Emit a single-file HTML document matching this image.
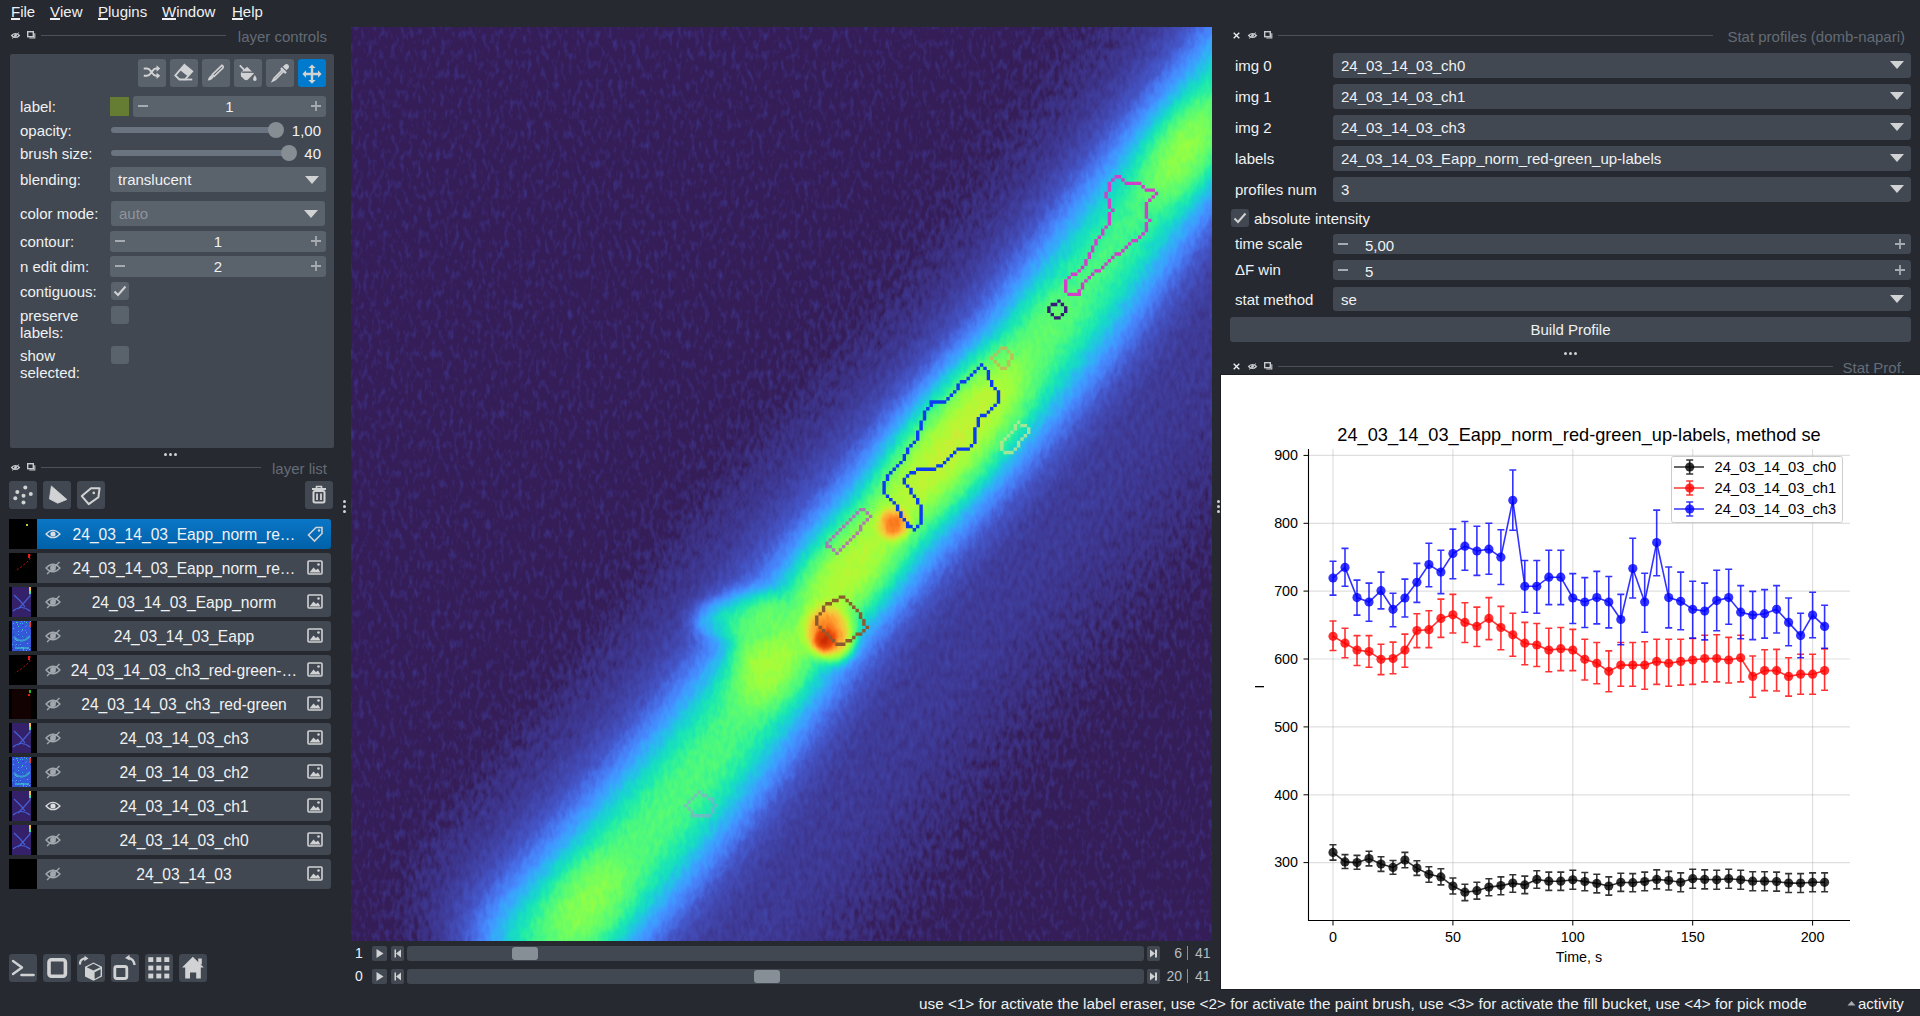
<!DOCTYPE html>
<html><head><meta charset="utf-8">
<style>
*{box-sizing:border-box;margin:0;padding:0}
html,body{width:1920px;height:1016px;overflow:hidden;background:#262930;font-family:"Liberation Sans",sans-serif;color:#f0f1f2;font-size:15px}
.a{position:absolute}
.t{position:absolute;white-space:nowrap;line-height:16px;font-size:15px}
.menu span{position:absolute;top:4px;font-size:15px;line-height:16px}
.menu u{text-decoration:none;position:relative}
.menu u:after{content:"";position:absolute;left:0;right:0;top:15px;height:2px;background:#f0f1f2}
.ttl{position:absolute;color:#646c76;font-size:15px;line-height:16px;white-space:nowrap}
.hl{position:absolute;height:1px;background:#414851}
.panel{position:absolute;background:#414851;border-radius:2px}
.btn{position:absolute;background:#5a626c;border-radius:3px}
.spin{position:absolute;background:#5a626c;border-radius:3px}
.track{position:absolute;background:#6a7380;height:6px;border-radius:3px}
.knob{position:absolute;width:16px;height:16px;border-radius:8px;background:#868e93}
.cb{position:absolute;width:18px;height:18px;background:#5a626c;border-radius:3px}
.row{position:absolute;left:37px;width:294px;height:30px;background:#414851;border-radius:0 3px 3px 0}
.thumb{position:absolute;left:9px;width:28px;height:30px;background:#000}
.lname{position:absolute;left:0;width:294px;text-align:center;top:7px;font-size:15.6px;line-height:17px;white-space:nowrap}
.combo{position:absolute;left:1333px;width:578px;height:25px;background:#414851;border-radius:3px}
.combo span{position:absolute;left:8px;top:4px;font-size:15px;line-height:17px;white-space:nowrap}
.arr{position:absolute;right:8px;top:8px;width:0;height:0;border-left:7px solid transparent;border-right:7px solid transparent;border-top:9px solid #d1d2d4}
svg{position:absolute;overflow:visible}

</style></head><body>
<div class="menu">
<span style="left:11px"><u>F</u>ile</span>
<span style="left:50px"><u>V</u>iew</span>
<span style="left:98px"><u>P</u>lugins</span>
<span style="left:162px"><u>W</u>indow</span>
<span style="left:232px"><u>H</u>elp</span>
</div>
<svg style="left:11px;top:32px" width="9" height="7"><path d="M0.6 3.5 Q4.5 -0.5 8.4 3.5 Q4.5 7.5 0.6 3.5Z" fill="none" stroke="#c8cacd" stroke-width="1.2"/><circle cx="4.5" cy="3.5" r="1.4" fill="#c8cacd"/><path d="M1 6.5L8 0.5" stroke="#c8cacd" stroke-width="0.9"/></svg><svg style="left:27px;top:31px" width="9" height="8"><rect x="0.7" y="0.7" width="5.6" height="5" fill="none" stroke="#c8cacd" stroke-width="1.4"/><path d="M7.8 2.3V7H2.3" fill="none" stroke="#c8cacd" stroke-width="1.1"/></svg>
<div class="hl" style="left:41px;top:35px;width:185px;background:#4a515a"></div>
<div class="ttl" style="right:1593px;top:29px">layer controls</div>
<div class="panel" style="left:10px;top:54px;width:324px;height:394px"></div>
<div class="btn" style="left:138px;top:59px;width:28px;height:28px;background:#5a626c"></div>
<svg style="left:141px;top:63px" width="22" height="22" viewBox="0 0 24 24"><path d="M3 6h3.5c2.5 0 3.5 2 5 4s2.5 4 5 4H19M3 14h3.5c2.5 0 3.5-2 5-4s2.5-4 5-4H19" fill="none" stroke="#d1d2d4" stroke-width="2.2"/><path d="M17 2.5L21 6L17 9.5ZM17 10.5L21 14L17 17.5Z" fill="#d1d2d4"/></svg>
<div class="btn" style="left:170px;top:59px;width:28px;height:28px;background:#5a626c"></div>
<svg style="left:173px;top:63px" width="22" height="22" viewBox="0 0 24 24"><path d="M12.5 2L21 9L13 18H7L2.5 13.5Z" fill="none" stroke="#d1d2d4" stroke-width="2"/><path d="M12.5 2L21 9L16 14.5L7.5 7.5Z" fill="#d1d2d4"/><path d="M13 18H21" stroke="#d1d2d4" stroke-width="2"/></svg>
<div class="btn" style="left:202px;top:59px;width:28px;height:28px;background:#5a626c"></div>
<svg style="left:205px;top:63px" width="22" height="22" viewBox="0 0 24 24"><path d="M18.5 2.5 Q20.5 3.5 19.5 5.5 L10 14.5 L8 12.5 Z" fill="none" stroke="#d1d2d4" stroke-width="1.8"/><path d="M7.5 13 L9.5 15 Q8 19 3 19 Q4 14.5 7.5 13Z" fill="#d1d2d4"/></svg>
<div class="btn" style="left:234px;top:59px;width:28px;height:28px;background:#5a626c"></div>
<svg style="left:237px;top:63px" width="22" height="22" viewBox="0 0 24 24"><path d="M3 2.5L9 8.5" stroke="#d1d2d4" stroke-width="2"/><path d="M5 9.5L11 4L18.5 11.5L12 18 Q10 19.5 8 18 L4.5 14.5 Q3 12.5 5 9.5Z" fill="#d1d2d4"/><path d="M5.5 10 L17.5 10" stroke="#5a626c" stroke-width="1.5"/><path d="M19.5 13 Q21.5 16 21.5 17.5 A2 2 0 0 1 17.5 17.5 Q17.5 16 19.5 13Z" fill="#d1d2d4"/></svg>
<div class="btn" style="left:266px;top:59px;width:28px;height:28px;background:#5a626c"></div>
<svg style="left:269px;top:63px" width="22" height="22" viewBox="0 0 24 24"><path d="M13 5.5L18.5 11" stroke="#d1d2d4" stroke-width="2.5"/><path d="M15 4 L17.5 1.5 Q19.5 0.5 21 2 Q22.5 3.5 21.5 5.5 L19 8Z" fill="#d1d2d4"/><path d="M14.5 7.5L5.5 16.5 L4 19.5 L7 18 L16 9" fill="none" stroke="#d1d2d4" stroke-width="1.8"/></svg>
<div class="btn" style="left:298px;top:59px;width:28px;height:28px;background:#007acc"></div>
<svg style="left:301px;top:63px" width="22" height="22" viewBox="0 0 24 24"><path d="M12 1.5L16 5.5H13.3V10.7H18.5V8L22.5 12L18.5 16V13.3H13.3V18.5H16L12 22.5L8 18.5H10.7V13.3H5.5V16L1.5 12L5.5 8V10.7H10.7V5.5H8Z" fill="#d1d2d4"/></svg>
<div class="t" style="left:20px;top:99px">label:</div>
<div class="a" style="left:110px;top:97px;width:19px;height:19px;background:#647d33"></div>
<div class="spin" style="left:133px;top:96px;width:193px;height:21px"></div>
<div class="a" style="left:138px;top:105px;width:10px;height:2px;background:#a6abb1"></div>
<svg style="left:311px;top:101px" width="10" height="10"><path d="M5 0V10M0 5H10" stroke="#a6abb1" stroke-width="1.8"/></svg>
<div class="t" style="left:133px;width:193px;text-align:center;top:99px">1</div>
<div class="t" style="left:20px;top:123px">opacity:</div>
<div class="track" style="left:111px;top:127px;width:170px"></div>
<div class="knob" style="left:268px;top:122px"></div>
<div class="t" style="right:1599px;top:123px">1,00</div>
<div class="t" style="left:20px;top:146px">brush size:</div>
<div class="track" style="left:111px;top:150px;width:180px"></div>
<div class="knob" style="left:281px;top:145px"></div>
<div class="t" style="right:1599px;top:146px">40</div>
<div class="t" style="left:20px;top:172px">blending:</div>
<div class="spin" style="left:110px;top:167px;width:216px;height:25px"></div>
<div class="t" style="left:118px;top:172px">translucent</div>
<div class="a" style="left:305px;top:176px;border-left:7px solid transparent;border-right:7px solid transparent;border-top:8px solid #d1d2d4"></div>
<div class="t" style="left:20px;top:206px">color mode:</div>
<div class="spin" style="left:111px;top:201px;width:214px;height:25px"></div>
<div class="t" style="left:119px;top:206px;color:#8f959b">auto</div>
<div class="a" style="left:304px;top:210px;border-left:7px solid transparent;border-right:7px solid transparent;border-top:8px solid #d1d2d4"></div>
<div class="t" style="left:20px;top:234px">contour:</div>
<div class="spin" style="left:110px;top:231px;width:216px;height:21px"></div>
<div class="a" style="left:115px;top:240px;width:10px;height:2px;background:#a6abb1"></div>
<svg style="left:311px;top:236px" width="10" height="10"><path d="M5 0V10M0 5H10" stroke="#a6abb1" stroke-width="1.8"/></svg>
<div class="t" style="left:110px;width:216px;text-align:center;top:234px">1</div>
<div class="t" style="left:20px;top:259px">n edit dim:</div>
<div class="spin" style="left:110px;top:256px;width:216px;height:21px"></div>
<div class="a" style="left:115px;top:265px;width:10px;height:2px;background:#a6abb1"></div>
<svg style="left:311px;top:261px" width="10" height="10"><path d="M5 0V10M0 5H10" stroke="#a6abb1" stroke-width="1.8"/></svg>
<div class="t" style="left:110px;width:216px;text-align:center;top:259px">2</div>
<div class="t" style="left:20px;top:284px">contiguous:</div>
<div class="cb" style="left:111px;top:282px"></div>
<svg style="left:113px;top:285px" width="14" height="12"><path d="M1.5 6.5L5 10L12.5 1.5" fill="none" stroke="#d1d2d4" stroke-width="2"/></svg>
<div class="t" style="left:20px;top:307px;line-height:17px">preserve<br>labels:</div>
<div class="cb" style="left:111px;top:306px"></div>
<div class="t" style="left:20px;top:347px;line-height:17px">show<br>selected:</div>
<div class="cb" style="left:111px;top:346px"></div>
<div class="a" style="left:164px;top:453px;width:3px;height:3px;border-radius:2px;background:#d1d2d4"></div>
<div class="a" style="left:169px;top:453px;width:3px;height:3px;border-radius:2px;background:#d1d2d4"></div>
<div class="a" style="left:174px;top:453px;width:3px;height:3px;border-radius:2px;background:#d1d2d4"></div>
<svg style="left:11px;top:464px" width="9" height="7"><path d="M0.6 3.5 Q4.5 -0.5 8.4 3.5 Q4.5 7.5 0.6 3.5Z" fill="none" stroke="#c8cacd" stroke-width="1.2"/><circle cx="4.5" cy="3.5" r="1.4" fill="#c8cacd"/><path d="M1 6.5L8 0.5" stroke="#c8cacd" stroke-width="0.9"/></svg><svg style="left:27px;top:463px" width="9" height="8"><rect x="0.7" y="0.7" width="5.6" height="5" fill="none" stroke="#c8cacd" stroke-width="1.4"/><path d="M7.8 2.3V7H2.3" fill="none" stroke="#c8cacd" stroke-width="1.1"/></svg>
<div class="hl" style="left:41px;top:467px;width:220px;background:#4a515a"></div>
<div class="ttl" style="right:1593px;top:461px">layer list</div>
<div class="btn" style="left:9px;top:481px;width:28px;height:28px;background:#414851"></div>
<svg style="left:9px;top:481px" width="28" height="28" viewBox="0 0 28 28"><circle cx="16.3" cy="6.5" r="2" fill="#d1d2d4"/><circle cx="8.3" cy="11" r="2" fill="#d1d2d4"/><circle cx="21.8" cy="13" r="2" fill="#d1d2d4"/><circle cx="14.5" cy="14.8" r="2" fill="#d1d2d4"/><circle cx="6.3" cy="17.3" r="2" fill="#d1d2d4"/><circle cx="14.5" cy="21.6" r="2" fill="#d1d2d4"/></svg>
<div class="btn" style="left:43px;top:481px;width:28px;height:28px;background:#414851"></div>
<svg style="left:43px;top:481px" width="28" height="28" viewBox="0 0 28 28"><path d="M8.4 5L23.9 18.5L14.7 22.2L6.4 17.9Z" fill="#d1d2d4" stroke="#d1d2d4" stroke-width="0.8" stroke-linejoin="round"/></svg>
<div class="btn" style="left:77px;top:481px;width:28px;height:28px;background:#414851"></div>
<svg style="left:77px;top:481px" width="28" height="28" viewBox="0 0 28 28"><path d="M14 7.2H22.6L21.4 16.2L11.7 23.1L4.8 15.1Z" fill="none" stroke="#d1d2d4" stroke-width="2" stroke-linejoin="round"/><circle cx="16.8" cy="11.9" r="1.3" fill="#d1d2d4"/></svg>
<div class="btn" style="left:305px;top:481px;width:28px;height:28px;background:#414851"></div>
<svg style="left:305px;top:481px" width="28" height="28" viewBox="0 0 28 28"><path d="M7 8H21" stroke="#d1d2d4" stroke-width="2"/><path d="M11.5 7.5V5.5H16.5V7.5" fill="none" stroke="#d1d2d4" stroke-width="1.6"/><rect x="8.5" y="10" width="11" height="11.5" rx="1.5" fill="none" stroke="#d1d2d4" stroke-width="2"/><path d="M12 12.5V19M16 12.5V19" stroke="#d1d2d4" stroke-width="1.8"/></svg>
<div class="a" style="left:343px;top:500px;width:3px;height:3px;border-radius:2px;background:#d1d2d4"></div>
<div class="a" style="left:343px;top:505px;width:3px;height:3px;border-radius:2px;background:#d1d2d4"></div>
<div class="a" style="left:343px;top:510px;width:3px;height:3px;border-radius:2px;background:#d1d2d4"></div>
<svg style="left:9px;top:519px" width="28" height="30"><rect width="28" height="30" fill="#000"/><rect x="17" y="5" width="2" height="2" fill="#c8c040"/></svg>
<div class="row" style="top:519px;background:linear-gradient(#0a76c6,#0061a9)"></div>
<svg style="left:45px;top:527px" width="16" height="14"><path d="M1 7 Q8 -0.5 15 7 Q8 14.5 1 7Z" fill="none" stroke="#dcdde0" stroke-width="1.2"/><circle cx="8" cy="7" r="2.6" fill="#dcdde0"/></svg>
<div class="t" style="left:37px;width:294px;text-align:center;top:526px;font-size:15.6px;line-height:17px;padding-left:0px">24_03_14_03_Eapp_norm_re…</div>
<svg style="left:307px;top:526px" width="16" height="16"><path d="M9 1.5H15V7.5L7.5 15L1.5 9Z" fill="none" stroke="#d1d2d4" stroke-width="1.6"/><circle cx="12" cy="4.5" r="1.2" fill="#d1d2d4"/></svg>
<svg style="left:9px;top:553px" width="28" height="30"><rect width="28" height="30" fill="#000"/><path d="M21 1V6L17 10L12 14L6 18" fill="none" stroke="#c01010" stroke-width="1" stroke-dasharray="2 2"/><rect x="19" y="1" width="2" height="4" fill="#e02020"/></svg>
<div class="row" style="top:553px;background:#414851"></div>
<svg style="left:45px;top:561px" width="16" height="14"><path d="M1 7 Q8 -0.5 15 7 Q8 14.5 1 7Z" fill="none" stroke="#a3a8ae" stroke-width="1.3"/><circle cx="8" cy="7" r="2.9" fill="#a3a8ae"/><path d="M2 13L14.5 1" stroke="#a3a8ae" stroke-width="1.3"/></svg>
<div class="t" style="left:37px;width:294px;text-align:center;top:560px;font-size:15.6px;line-height:17px;padding-left:0px">24_03_14_03_Eapp_norm_re…</div>
<svg style="left:307px;top:560px" width="16" height="16"><rect x="1" y="1" width="14" height="13" rx="1" fill="none" stroke="#d1d2d4" stroke-width="1.6"/><path d="M2.5 12.5L6.5 7.5L9 10L11 8.5L13.5 12.5Z" fill="#d1d2d4"/><circle cx="11.5" cy="4.5" r="1.3" fill="#d1d2d4"/></svg>
<svg style="left:9px;top:587px" width="28" height="30"><rect width="28" height="30" fill="#000"/><rect x="3" y="0" width="19" height="30" fill="#35206a"/><path d="M21 2V9L14 17L9 22M5 8Q12 14 16 20M4 24Q12 17 21 24" fill="none" stroke="#4a70f0" stroke-width="1.2" stroke-opacity="0.8"/><rect x="20" y="0" width="2" height="4" fill="#f0c030"/><rect x="20" y="4" width="2" height="3" fill="#40e0a0"/></svg>
<div class="row" style="top:587px;background:#414851"></div>
<svg style="left:45px;top:595px" width="16" height="14"><path d="M1 7 Q8 -0.5 15 7 Q8 14.5 1 7Z" fill="none" stroke="#a3a8ae" stroke-width="1.3"/><circle cx="8" cy="7" r="2.9" fill="#a3a8ae"/><path d="M2 13L14.5 1" stroke="#a3a8ae" stroke-width="1.3"/></svg>
<div class="t" style="left:37px;width:294px;text-align:center;top:594px;font-size:15.6px;line-height:17px;padding-left:0px">24_03_14_03_Eapp_norm</div>
<svg style="left:307px;top:594px" width="16" height="16"><rect x="1" y="1" width="14" height="13" rx="1" fill="none" stroke="#d1d2d4" stroke-width="1.6"/><path d="M2.5 12.5L6.5 7.5L9 10L11 8.5L13.5 12.5Z" fill="#d1d2d4"/><circle cx="11.5" cy="4.5" r="1.3" fill="#d1d2d4"/></svg>
<svg style="left:9px;top:621px" width="28" height="30"><rect width="28" height="30" fill="#000"/><rect x="3" y="0" width="19" height="30" fill="#3458d8"/><rect x="11" y="23" width="1" height="1" fill="#30b0e8"/><rect x="19" y="0" width="1" height="1" fill="#2c48c0"/><rect x="10" y="20" width="1" height="1" fill="#2a3aa0"/><rect x="8" y="3" width="1" height="1" fill="#30b0e8"/><rect x="18" y="27" width="1" height="1" fill="#4a80f0"/><rect x="15" y="17" width="1" height="1" fill="#2a3aa0"/><rect x="21" y="7" width="1" height="1" fill="#2a3aa0"/><rect x="9" y="13" width="1" height="1" fill="#30b0e8"/><rect x="8" y="29" width="1" height="1" fill="#2c48c0"/><rect x="8" y="24" width="1" height="1" fill="#2a3aa0"/><rect x="7" y="19" width="1" height="1" fill="#5aa0ff"/><rect x="17" y="4" width="1" height="1" fill="#4a80f0"/><rect x="3" y="27" width="1" height="1" fill="#2a3aa0"/><rect x="9" y="24" width="1" height="1" fill="#4a80f0"/><rect x="8" y="27" width="1" height="1" fill="#4a80f0"/><rect x="12" y="10" width="1" height="1" fill="#4a80f0"/><rect x="20" y="28" width="1" height="1" fill="#38d0b0"/><rect x="9" y="5" width="1" height="1" fill="#38d0b0"/><rect x="9" y="28" width="1" height="1" fill="#2c48c0"/><rect x="12" y="0" width="1" height="1" fill="#30b0e8"/><rect x="16" y="5" width="1" height="1" fill="#4a80f0"/><rect x="11" y="2" width="1" height="1" fill="#30b0e8"/><rect x="12" y="26" width="1" height="1" fill="#5aa0ff"/><rect x="21" y="0" width="1" height="1" fill="#5aa0ff"/><rect x="13" y="2" width="1" height="1" fill="#30b0e8"/><rect x="14" y="26" width="1" height="1" fill="#30b0e8"/><rect x="18" y="22" width="1" height="1" fill="#30b0e8"/><rect x="8" y="15" width="1" height="1" fill="#2c48c0"/><rect x="8" y="1" width="1" height="1" fill="#30b0e8"/><rect x="3" y="23" width="1" height="1" fill="#30b0e8"/><rect x="15" y="0" width="1" height="1" fill="#5aa0ff"/><rect x="16" y="11" width="1" height="1" fill="#2c48c0"/><rect x="21" y="26" width="1" height="1" fill="#2a3aa0"/><rect x="17" y="1" width="1" height="1" fill="#38d0b0"/><rect x="8" y="19" width="1" height="1" fill="#4a80f0"/><rect x="6" y="24" width="1" height="1" fill="#4a80f0"/><rect x="17" y="11" width="1" height="1" fill="#5aa0ff"/><rect x="14" y="28" width="1" height="1" fill="#5aa0ff"/><rect x="11" y="24" width="1" height="1" fill="#2c48c0"/><rect x="6" y="18" width="1" height="1" fill="#38d0b0"/><rect x="14" y="27" width="1" height="1" fill="#30b0e8"/><rect x="4" y="13" width="1" height="1" fill="#2a3aa0"/><rect x="9" y="10" width="1" height="1" fill="#5aa0ff"/><rect x="14" y="29" width="1" height="1" fill="#4a80f0"/><rect x="13" y="8" width="1" height="1" fill="#38d0b0"/><rect x="20" y="2" width="1" height="1" fill="#30b0e8"/><rect x="13" y="9" width="1" height="1" fill="#4a80f0"/><rect x="5" y="20" width="1" height="1" fill="#4a80f0"/><rect x="12" y="15" width="1" height="1" fill="#4a80f0"/><rect x="4" y="2" width="1" height="1" fill="#5aa0ff"/><rect x="20" y="29" width="1" height="1" fill="#2c48c0"/><rect x="4" y="7" width="1" height="1" fill="#38d0b0"/><rect x="14" y="26" width="1" height="1" fill="#30b0e8"/><rect x="17" y="20" width="1" height="1" fill="#2c48c0"/><rect x="7" y="1" width="1" height="1" fill="#38d0b0"/><rect x="4" y="25" width="1" height="1" fill="#2c48c0"/><rect x="13" y="26" width="1" height="1" fill="#4a80f0"/><rect x="7" y="23" width="1" height="1" fill="#5aa0ff"/><rect x="7" y="20" width="1" height="1" fill="#2c48c0"/><rect x="6" y="5" width="1" height="1" fill="#2c48c0"/><rect x="14" y="4" width="1" height="1" fill="#2a3aa0"/><rect x="16" y="9" width="1" height="1" fill="#4a80f0"/><rect x="17" y="29" width="1" height="1" fill="#5aa0ff"/><rect x="8" y="16" width="1" height="1" fill="#2c48c0"/><rect x="18" y="22" width="1" height="1" fill="#38d0b0"/><rect x="13" y="15" width="1" height="1" fill="#30b0e8"/><rect x="12" y="15" width="1" height="1" fill="#2c48c0"/><rect x="7" y="3" width="1" height="1" fill="#2c48c0"/><rect x="20" y="5" width="1" height="1" fill="#38d0b0"/><rect x="18" y="27" width="1" height="1" fill="#30b0e8"/><path d="M5 16Q12 24 21 15M6 27L20 27" stroke="#34c8c8" stroke-width="2" fill="none" stroke-opacity="0.6"/><rect x="20" y="1" width="2" height="5" fill="#e04020"/></svg>
<div class="row" style="top:621px;background:#414851"></div>
<svg style="left:45px;top:629px" width="16" height="14"><path d="M1 7 Q8 -0.5 15 7 Q8 14.5 1 7Z" fill="none" stroke="#a3a8ae" stroke-width="1.3"/><circle cx="8" cy="7" r="2.9" fill="#a3a8ae"/><path d="M2 13L14.5 1" stroke="#a3a8ae" stroke-width="1.3"/></svg>
<div class="t" style="left:37px;width:294px;text-align:center;top:628px;font-size:15.6px;line-height:17px;padding-left:0px">24_03_14_03_Eapp</div>
<svg style="left:307px;top:628px" width="16" height="16"><rect x="1" y="1" width="14" height="13" rx="1" fill="none" stroke="#d1d2d4" stroke-width="1.6"/><path d="M2.5 12.5L6.5 7.5L9 10L11 8.5L13.5 12.5Z" fill="#d1d2d4"/><circle cx="11.5" cy="4.5" r="1.3" fill="#d1d2d4"/></svg>
<svg style="left:9px;top:655px" width="28" height="30"><rect width="28" height="30" fill="#000"/><path d="M21 1V6L17 10L12 14L6 18" fill="none" stroke="#c01010" stroke-width="1" stroke-dasharray="2 2"/><rect x="19" y="1" width="2" height="4" fill="#e02020"/></svg>
<div class="row" style="top:655px;background:#414851"></div>
<svg style="left:45px;top:663px" width="16" height="14"><path d="M1 7 Q8 -0.5 15 7 Q8 14.5 1 7Z" fill="none" stroke="#a3a8ae" stroke-width="1.3"/><circle cx="8" cy="7" r="2.9" fill="#a3a8ae"/><path d="M2 13L14.5 1" stroke="#a3a8ae" stroke-width="1.3"/></svg>
<div class="t" style="left:37px;width:294px;text-align:center;top:662px;font-size:15.6px;line-height:17px;padding-left:0px">24_03_14_03_ch3_red-green-…</div>
<svg style="left:307px;top:662px" width="16" height="16"><rect x="1" y="1" width="14" height="13" rx="1" fill="none" stroke="#d1d2d4" stroke-width="1.6"/><path d="M2.5 12.5L6.5 7.5L9 10L11 8.5L13.5 12.5Z" fill="#d1d2d4"/><circle cx="11.5" cy="4.5" r="1.3" fill="#d1d2d4"/></svg>
<svg style="left:9px;top:689px" width="28" height="30"><rect width="28" height="30" fill="#000"/><rect x="3" y="0" width="19" height="30" fill="#120202"/><rect x="20" y="1" width="2" height="3" fill="#20c020"/><rect x="19" y="5" width="2" height="2" fill="#d02020"/></svg>
<div class="row" style="top:689px;background:#414851"></div>
<svg style="left:45px;top:697px" width="16" height="14"><path d="M1 7 Q8 -0.5 15 7 Q8 14.5 1 7Z" fill="none" stroke="#a3a8ae" stroke-width="1.3"/><circle cx="8" cy="7" r="2.9" fill="#a3a8ae"/><path d="M2 13L14.5 1" stroke="#a3a8ae" stroke-width="1.3"/></svg>
<div class="t" style="left:37px;width:294px;text-align:center;top:696px;font-size:15.6px;line-height:17px;padding-left:0px">24_03_14_03_ch3_red-green</div>
<svg style="left:307px;top:696px" width="16" height="16"><rect x="1" y="1" width="14" height="13" rx="1" fill="none" stroke="#d1d2d4" stroke-width="1.6"/><path d="M2.5 12.5L6.5 7.5L9 10L11 8.5L13.5 12.5Z" fill="#d1d2d4"/><circle cx="11.5" cy="4.5" r="1.3" fill="#d1d2d4"/></svg>
<svg style="left:9px;top:723px" width="28" height="30"><rect width="28" height="30" fill="#000"/><rect x="3" y="0" width="19" height="30" fill="#35206a"/><path d="M21 2V9L14 17L9 22M5 8Q12 14 16 20M4 24Q12 17 21 24" fill="none" stroke="#4a70f0" stroke-width="1.2" stroke-opacity="0.8"/><rect x="20" y="0" width="2" height="4" fill="#f0c030"/><rect x="20" y="4" width="2" height="3" fill="#40e0a0"/></svg>
<div class="row" style="top:723px;background:#414851"></div>
<svg style="left:45px;top:731px" width="16" height="14"><path d="M1 7 Q8 -0.5 15 7 Q8 14.5 1 7Z" fill="none" stroke="#a3a8ae" stroke-width="1.3"/><circle cx="8" cy="7" r="2.9" fill="#a3a8ae"/><path d="M2 13L14.5 1" stroke="#a3a8ae" stroke-width="1.3"/></svg>
<div class="t" style="left:37px;width:294px;text-align:center;top:730px;font-size:15.6px;line-height:17px;padding-left:0px">24_03_14_03_ch3</div>
<svg style="left:307px;top:730px" width="16" height="16"><rect x="1" y="1" width="14" height="13" rx="1" fill="none" stroke="#d1d2d4" stroke-width="1.6"/><path d="M2.5 12.5L6.5 7.5L9 10L11 8.5L13.5 12.5Z" fill="#d1d2d4"/><circle cx="11.5" cy="4.5" r="1.3" fill="#d1d2d4"/></svg>
<svg style="left:9px;top:757px" width="28" height="30"><rect width="28" height="30" fill="#000"/><rect x="3" y="0" width="19" height="30" fill="#3458d8"/><rect x="11" y="23" width="1" height="1" fill="#30b0e8"/><rect x="19" y="0" width="1" height="1" fill="#2c48c0"/><rect x="10" y="20" width="1" height="1" fill="#2a3aa0"/><rect x="8" y="3" width="1" height="1" fill="#30b0e8"/><rect x="18" y="27" width="1" height="1" fill="#4a80f0"/><rect x="15" y="17" width="1" height="1" fill="#2a3aa0"/><rect x="21" y="7" width="1" height="1" fill="#2a3aa0"/><rect x="9" y="13" width="1" height="1" fill="#30b0e8"/><rect x="8" y="29" width="1" height="1" fill="#2c48c0"/><rect x="8" y="24" width="1" height="1" fill="#2a3aa0"/><rect x="7" y="19" width="1" height="1" fill="#5aa0ff"/><rect x="17" y="4" width="1" height="1" fill="#4a80f0"/><rect x="3" y="27" width="1" height="1" fill="#2a3aa0"/><rect x="9" y="24" width="1" height="1" fill="#4a80f0"/><rect x="8" y="27" width="1" height="1" fill="#4a80f0"/><rect x="12" y="10" width="1" height="1" fill="#4a80f0"/><rect x="20" y="28" width="1" height="1" fill="#38d0b0"/><rect x="9" y="5" width="1" height="1" fill="#38d0b0"/><rect x="9" y="28" width="1" height="1" fill="#2c48c0"/><rect x="12" y="0" width="1" height="1" fill="#30b0e8"/><rect x="16" y="5" width="1" height="1" fill="#4a80f0"/><rect x="11" y="2" width="1" height="1" fill="#30b0e8"/><rect x="12" y="26" width="1" height="1" fill="#5aa0ff"/><rect x="21" y="0" width="1" height="1" fill="#5aa0ff"/><rect x="13" y="2" width="1" height="1" fill="#30b0e8"/><rect x="14" y="26" width="1" height="1" fill="#30b0e8"/><rect x="18" y="22" width="1" height="1" fill="#30b0e8"/><rect x="8" y="15" width="1" height="1" fill="#2c48c0"/><rect x="8" y="1" width="1" height="1" fill="#30b0e8"/><rect x="3" y="23" width="1" height="1" fill="#30b0e8"/><rect x="15" y="0" width="1" height="1" fill="#5aa0ff"/><rect x="16" y="11" width="1" height="1" fill="#2c48c0"/><rect x="21" y="26" width="1" height="1" fill="#2a3aa0"/><rect x="17" y="1" width="1" height="1" fill="#38d0b0"/><rect x="8" y="19" width="1" height="1" fill="#4a80f0"/><rect x="6" y="24" width="1" height="1" fill="#4a80f0"/><rect x="17" y="11" width="1" height="1" fill="#5aa0ff"/><rect x="14" y="28" width="1" height="1" fill="#5aa0ff"/><rect x="11" y="24" width="1" height="1" fill="#2c48c0"/><rect x="6" y="18" width="1" height="1" fill="#38d0b0"/><rect x="14" y="27" width="1" height="1" fill="#30b0e8"/><rect x="4" y="13" width="1" height="1" fill="#2a3aa0"/><rect x="9" y="10" width="1" height="1" fill="#5aa0ff"/><rect x="14" y="29" width="1" height="1" fill="#4a80f0"/><rect x="13" y="8" width="1" height="1" fill="#38d0b0"/><rect x="20" y="2" width="1" height="1" fill="#30b0e8"/><rect x="13" y="9" width="1" height="1" fill="#4a80f0"/><rect x="5" y="20" width="1" height="1" fill="#4a80f0"/><rect x="12" y="15" width="1" height="1" fill="#4a80f0"/><rect x="4" y="2" width="1" height="1" fill="#5aa0ff"/><rect x="20" y="29" width="1" height="1" fill="#2c48c0"/><rect x="4" y="7" width="1" height="1" fill="#38d0b0"/><rect x="14" y="26" width="1" height="1" fill="#30b0e8"/><rect x="17" y="20" width="1" height="1" fill="#2c48c0"/><rect x="7" y="1" width="1" height="1" fill="#38d0b0"/><rect x="4" y="25" width="1" height="1" fill="#2c48c0"/><rect x="13" y="26" width="1" height="1" fill="#4a80f0"/><rect x="7" y="23" width="1" height="1" fill="#5aa0ff"/><rect x="7" y="20" width="1" height="1" fill="#2c48c0"/><rect x="6" y="5" width="1" height="1" fill="#2c48c0"/><rect x="14" y="4" width="1" height="1" fill="#2a3aa0"/><rect x="16" y="9" width="1" height="1" fill="#4a80f0"/><rect x="17" y="29" width="1" height="1" fill="#5aa0ff"/><rect x="8" y="16" width="1" height="1" fill="#2c48c0"/><rect x="18" y="22" width="1" height="1" fill="#38d0b0"/><rect x="13" y="15" width="1" height="1" fill="#30b0e8"/><rect x="12" y="15" width="1" height="1" fill="#2c48c0"/><rect x="7" y="3" width="1" height="1" fill="#2c48c0"/><rect x="20" y="5" width="1" height="1" fill="#38d0b0"/><rect x="18" y="27" width="1" height="1" fill="#30b0e8"/><path d="M5 16Q12 24 21 15M6 27L20 27" stroke="#34c8c8" stroke-width="2" fill="none" stroke-opacity="0.6"/><rect x="20" y="1" width="2" height="5" fill="#e04020"/></svg>
<div class="row" style="top:757px;background:#414851"></div>
<svg style="left:45px;top:765px" width="16" height="14"><path d="M1 7 Q8 -0.5 15 7 Q8 14.5 1 7Z" fill="none" stroke="#a3a8ae" stroke-width="1.3"/><circle cx="8" cy="7" r="2.9" fill="#a3a8ae"/><path d="M2 13L14.5 1" stroke="#a3a8ae" stroke-width="1.3"/></svg>
<div class="t" style="left:37px;width:294px;text-align:center;top:764px;font-size:15.6px;line-height:17px;padding-left:0px">24_03_14_03_ch2</div>
<svg style="left:307px;top:764px" width="16" height="16"><rect x="1" y="1" width="14" height="13" rx="1" fill="none" stroke="#d1d2d4" stroke-width="1.6"/><path d="M2.5 12.5L6.5 7.5L9 10L11 8.5L13.5 12.5Z" fill="#d1d2d4"/><circle cx="11.5" cy="4.5" r="1.3" fill="#d1d2d4"/></svg>
<svg style="left:9px;top:791px" width="28" height="30"><rect width="28" height="30" fill="#000"/><rect x="3" y="0" width="19" height="30" fill="#35206a"/><path d="M21 2V9L14 17L9 22M5 8Q12 14 16 20M4 24Q12 17 21 24" fill="none" stroke="#4a70f0" stroke-width="1.2" stroke-opacity="0.8"/><rect x="20" y="0" width="2" height="4" fill="#f0c030"/><rect x="20" y="4" width="2" height="3" fill="#40e0a0"/></svg>
<div class="row" style="top:791px;background:#414851"></div>
<svg style="left:45px;top:799px" width="16" height="14"><path d="M1 7 Q8 -0.5 15 7 Q8 14.5 1 7Z" fill="none" stroke="#dcdde0" stroke-width="1.2"/><circle cx="8" cy="7" r="2.6" fill="#dcdde0"/></svg>
<div class="t" style="left:37px;width:294px;text-align:center;top:798px;font-size:15.6px;line-height:17px;padding-left:0px">24_03_14_03_ch1</div>
<svg style="left:307px;top:798px" width="16" height="16"><rect x="1" y="1" width="14" height="13" rx="1" fill="none" stroke="#d1d2d4" stroke-width="1.6"/><path d="M2.5 12.5L6.5 7.5L9 10L11 8.5L13.5 12.5Z" fill="#d1d2d4"/><circle cx="11.5" cy="4.5" r="1.3" fill="#d1d2d4"/></svg>
<svg style="left:9px;top:825px" width="28" height="30"><rect width="28" height="30" fill="#000"/><rect x="3" y="0" width="19" height="30" fill="#35206a"/><path d="M21 2V9L14 17L9 22M5 8Q12 14 16 20M4 24Q12 17 21 24" fill="none" stroke="#4a70f0" stroke-width="1.2" stroke-opacity="0.8"/><rect x="20" y="0" width="2" height="4" fill="#f0c030"/><rect x="20" y="4" width="2" height="3" fill="#40e0a0"/></svg>
<div class="row" style="top:825px;background:#414851"></div>
<svg style="left:45px;top:833px" width="16" height="14"><path d="M1 7 Q8 -0.5 15 7 Q8 14.5 1 7Z" fill="none" stroke="#a3a8ae" stroke-width="1.3"/><circle cx="8" cy="7" r="2.9" fill="#a3a8ae"/><path d="M2 13L14.5 1" stroke="#a3a8ae" stroke-width="1.3"/></svg>
<div class="t" style="left:37px;width:294px;text-align:center;top:832px;font-size:15.6px;line-height:17px;padding-left:0px">24_03_14_03_ch0</div>
<svg style="left:307px;top:832px" width="16" height="16"><rect x="1" y="1" width="14" height="13" rx="1" fill="none" stroke="#d1d2d4" stroke-width="1.6"/><path d="M2.5 12.5L6.5 7.5L9 10L11 8.5L13.5 12.5Z" fill="#d1d2d4"/><circle cx="11.5" cy="4.5" r="1.3" fill="#d1d2d4"/></svg>
<svg style="left:9px;top:859px" width="28" height="30"><rect width="28" height="30" fill="#000"/></svg>
<div class="row" style="top:859px;background:#414851"></div>
<svg style="left:45px;top:867px" width="16" height="14"><path d="M1 7 Q8 -0.5 15 7 Q8 14.5 1 7Z" fill="none" stroke="#a3a8ae" stroke-width="1.3"/><circle cx="8" cy="7" r="2.9" fill="#a3a8ae"/><path d="M2 13L14.5 1" stroke="#a3a8ae" stroke-width="1.3"/></svg>
<div class="t" style="left:37px;width:294px;text-align:center;top:866px;font-size:15.6px;line-height:17px;padding-left:0px">24_03_14_03</div>
<svg style="left:307px;top:866px" width="16" height="16"><rect x="1" y="1" width="14" height="13" rx="1" fill="none" stroke="#d1d2d4" stroke-width="1.6"/><path d="M2.5 12.5L6.5 7.5L9 10L11 8.5L13.5 12.5Z" fill="#d1d2d4"/><circle cx="11.5" cy="4.5" r="1.3" fill="#d1d2d4"/></svg>
<div class="btn" style="left:9px;top:954px;width:28px;height:28px;background:#414851"></div>
<svg style="left:9px;top:954px" width="28" height="28" viewBox="0 0 28 28"><path d="M4 7L13 13.5L4 20" fill="none" stroke="#d1d2d4" stroke-width="2.4" stroke-linecap="round" stroke-linejoin="round"/><path d="M12.5 21H24.5" stroke="#d1d2d4" stroke-width="2.6" stroke-linecap="round"/></svg>
<div class="btn" style="left:43px;top:954px;width:28px;height:28px;background:#414851"></div>
<svg style="left:43px;top:954px" width="28" height="28" viewBox="0 0 28 28"><rect x="6" y="5.8" width="16.4" height="16.4" rx="2.5" fill="none" stroke="#d1d2d4" stroke-width="3.6"/></svg>
<div class="btn" style="left:77px;top:954px;width:28px;height:28px;background:#414851"></div>
<svg style="left:77px;top:954px" width="28" height="28" viewBox="0 0 28 28"><path d="M16.5 8.5L25 12.8V22.5L16.5 26.8L8 22.5V12.8Z" fill="#d1d2d4"/><path d="M16.5 9.8L23.2 13.2L16.5 16.6L9.8 13.2Z" fill="#414851"/><path d="M17.6 18.3L23.6 15.2V21.8L17.6 24.9Z" fill="#414851"/><path d="M3 10.5 Q2.5 5.5 8 4.3" fill="none" stroke="#d1d2d4" stroke-width="2.2"/><path d="M7.5 1.8L11.5 4.6L7.2 7.2Z" fill="#d1d2d4"/></svg>
<div class="btn" style="left:111px;top:954px;width:28px;height:28px;background:#414851"></div>
<svg style="left:111px;top:954px" width="28" height="28" viewBox="0 0 28 28"><rect x="3.8" y="12.5" width="12" height="12" rx="2" fill="none" stroke="#d1d2d4" stroke-width="2.8"/><path d="M23.5 11 Q23 5 17.5 3.8" fill="none" stroke="#d1d2d4" stroke-width="2.4"/><path d="M18.5 0.8L14 3.9L18.8 6.5Z" fill="#d1d2d4"/></svg>
<div class="btn" style="left:145px;top:954px;width:28px;height:28px;background:#414851"></div>
<svg style="left:145px;top:954px" width="28" height="28" viewBox="0 0 28 28"><rect x="3.3" y="3.2" width="5" height="4.8" fill="#d1d2d4"/><rect x="3.3" y="11.6" width="5" height="4.8" fill="#d1d2d4"/><rect x="3.3" y="19.6" width="5" height="4.8" fill="#d1d2d4"/><rect x="11.3" y="3.2" width="5" height="4.8" fill="#d1d2d4"/><rect x="11.3" y="11.6" width="5" height="4.8" fill="#d1d2d4"/><rect x="11.3" y="19.6" width="5" height="4.8" fill="#d1d2d4"/><rect x="19.3" y="3.2" width="5" height="4.8" fill="#d1d2d4"/><rect x="19.3" y="11.6" width="5" height="4.8" fill="#d1d2d4"/><rect x="19.3" y="19.6" width="5" height="4.8" fill="#d1d2d4"/></svg>
<div class="btn" style="left:179px;top:954px;width:28px;height:28px;background:#414851"></div>
<svg style="left:179px;top:954px" width="28" height="28" viewBox="0 0 28 28"><path d="M13.8 2.8L24.8 13.5H21.8V24.5H17.2V18.5H11V24.5H6.2V13.5H3Z" fill="#d1d2d4"/><rect x="19.2" y="4.5" width="3.6" height="6" fill="#d1d2d4"/></svg><svg style="left:351px;top:27px" width="861" height="914" viewBox="351 27 861 914">
<defs>
<filter id="cmap" x="351" y="27" width="861" height="914" filterUnits="userSpaceOnUse" color-interpolation-filters="sRGB"><feTurbulence type="fractalNoise" baseFrequency="0.22 0.1" numOctaves="2" seed="7" result="nz"/><feColorMatrix in="nz" type="matrix" values="1 0 0 0 0 1 0 0 0 0 1 0 0 0 0 0 0 0 0 1" result="ng"/><feComposite in="SourceGraphic" in2="ng" operator="arithmetic" k1="0" k2="1" k3="0.07" k4="-0.035"/><feComponentTransfer><feFuncR type="table" tableValues="0.209 0.225 0.236 0.242 0.248 0.254 0.259 0.263 0.267 0.270 0.274 0.276 0.277 0.276 0.274 0.269 0.254 0.239 0.220 0.193 0.172 0.145 0.122 0.104 0.094 0.095 0.108 0.135 0.174 0.221 0.276 0.320 0.350 0.397 0.443 0.489 0.547 0.586 0.633 0.664 0.706 0.746 0.795 0.832 0.867 0.906 0.933 0.956 0.973 0.988 0.994 0.997 0.994 0.988 0.978 0.966 0.945 0.926 0.905 0.887 0.868 0.847 0.816 0.791 0.765"/><feFuncG type="table" tableValues="0.118 0.164 0.197 0.219 0.241 0.263 0.285 0.306 0.328 0.349 0.390 0.421 0.452 0.491 0.521 0.550 0.590 0.619 0.649 0.688 0.717 0.754 0.789 0.822 0.852 0.878 0.901 0.922 0.941 0.957 0.971 0.980 0.985 0.991 0.996 0.998 0.999 0.997 0.992 0.985 0.973 0.956 0.930 0.906 0.880 0.843 0.812 0.780 0.747 0.703 0.664 0.621 0.564 0.517 0.469 0.422 0.366 0.325 0.287 0.262 0.237 0.214 0.185 0.164 0.144"/><feFuncB type="table" tableValues="0.346 0.451 0.524 0.569 0.613 0.654 0.693 0.730 0.764 0.796 0.854 0.891 0.923 0.959 0.979 0.993 0.999 0.995 0.984 0.962 0.940 0.905 0.866 0.824 0.783 0.743 0.706 0.666 0.619 0.569 0.517 0.477 0.450 0.411 0.373 0.338 0.296 0.268 0.239 0.224 0.210 0.204 0.204 0.208 0.214 0.222 0.227 0.228 0.225 0.214 0.200 0.183 0.159 0.139 0.118 0.098 0.075 0.058 0.045 0.038 0.031 0.025 0.018 0.014 0.010"/></feComponentTransfer></filter>
<filter id="b3" x="-300" y="-300" width="2600" height="2600" filterUnits="userSpaceOnUse" color-interpolation-filters="sRGB"><feGaussianBlur stdDeviation="3"/></filter>
<filter id="b4" x="-300" y="-300" width="2600" height="2600" filterUnits="userSpaceOnUse" color-interpolation-filters="sRGB"><feGaussianBlur stdDeviation="4"/></filter>
<filter id="b5" x="-300" y="-300" width="2600" height="2600" filterUnits="userSpaceOnUse" color-interpolation-filters="sRGB"><feGaussianBlur stdDeviation="5"/></filter>
<filter id="b6" x="-300" y="-300" width="2600" height="2600" filterUnits="userSpaceOnUse" color-interpolation-filters="sRGB"><feGaussianBlur stdDeviation="6"/></filter>
<filter id="b7" x="-300" y="-300" width="2600" height="2600" filterUnits="userSpaceOnUse" color-interpolation-filters="sRGB"><feGaussianBlur stdDeviation="7"/></filter>
<filter id="b8" x="-300" y="-300" width="2600" height="2600" filterUnits="userSpaceOnUse" color-interpolation-filters="sRGB"><feGaussianBlur stdDeviation="8"/></filter>
<filter id="b9" x="-300" y="-300" width="2600" height="2600" filterUnits="userSpaceOnUse" color-interpolation-filters="sRGB"><feGaussianBlur stdDeviation="9"/></filter>
<filter id="b10" x="-300" y="-300" width="2600" height="2600" filterUnits="userSpaceOnUse" color-interpolation-filters="sRGB"><feGaussianBlur stdDeviation="10"/></filter>
<filter id="b12" x="-300" y="-300" width="2600" height="2600" filterUnits="userSpaceOnUse" color-interpolation-filters="sRGB"><feGaussianBlur stdDeviation="12"/></filter>
<filter id="b14" x="-300" y="-300" width="2600" height="2600" filterUnits="userSpaceOnUse" color-interpolation-filters="sRGB"><feGaussianBlur stdDeviation="14"/></filter>
<filter id="b16" x="-300" y="-300" width="2600" height="2600" filterUnits="userSpaceOnUse" color-interpolation-filters="sRGB"><feGaussianBlur stdDeviation="16"/></filter>
<filter id="b20" x="-300" y="-300" width="2600" height="2600" filterUnits="userSpaceOnUse" color-interpolation-filters="sRGB"><feGaussianBlur stdDeviation="20"/></filter>
<filter id="b25" x="-300" y="-300" width="2600" height="2600" filterUnits="userSpaceOnUse" color-interpolation-filters="sRGB"><feGaussianBlur stdDeviation="25"/></filter>
<filter id="b30" x="-300" y="-300" width="2600" height="2600" filterUnits="userSpaceOnUse" color-interpolation-filters="sRGB"><feGaussianBlur stdDeviation="30"/></filter>
<filter id="b40" x="-300" y="-300" width="2600" height="2600" filterUnits="userSpaceOnUse" color-interpolation-filters="sRGB"><feGaussianBlur stdDeviation="40"/></filter>
<filter id="b50" x="-300" y="-300" width="2600" height="2600" filterUnits="userSpaceOnUse" color-interpolation-filters="sRGB"><feGaussianBlur stdDeviation="50"/></filter>
<filter id="b60" x="-300" y="-300" width="2600" height="2600" filterUnits="userSpaceOnUse" color-interpolation-filters="sRGB"><feGaussianBlur stdDeviation="60"/></filter>
<filter id="b80" x="-300" y="-300" width="2600" height="2600" filterUnits="userSpaceOnUse" color-interpolation-filters="sRGB"><feGaussianBlur stdDeviation="80"/></filter>
</defs>
<g filter="url(#cmap)">
<rect x="351" y="27" width="861" height="914" fill="#000"/>
<polygon points="1368.5,61.4 1361.6,71.7 1353.0,84.6 1342.6,100.2 1330.2,118.6 1317.6,137.1 1305.1,155.3 1292.5,173.4 1280.0,191.5 1267.4,209.5 1254.7,227.4 1242.3,245.1 1230.3,262.4 1218.3,279.9 1206.3,297.6 1194.4,315.3 1182.5,333.0 1170.4,351.3 1158.1,370.1 1145.6,389.2 1132.7,408.6 1119.2,428.1 1105.4,447.3 1091.2,466.2 1077.0,484.5 1063.2,502.2 1049.2,519.9 1035.2,537.3 1021.4,554.3 1007.6,571.4 993.8,588.4 980.6,604.8 968.1,620.7 956.0,636.7 944.1,652.8 932.4,669.1 920.8,685.3 909.1,701.4 897.1,718.4 884.6,736.2 872.2,753.9 859.7,771.6 847.2,789.5 834.2,807.9 820.7,826.6 807.0,845.2 793.0,863.6 778.9,881.9 764.6,900.1 750.1,918.1 735.8,935.6 721.7,952.6 707.9,969.3 694.6,985.5 681.5,1001.7 668.6,1018.0 655.6,1034.4 644.8,1048.4 636.2,1059.7 629.3,1068.9 432.4,916.2 440.6,905.9 451.3,893.1 463.7,878.2 478.2,861.1 492.9,844.1 507.8,827.1 522.6,810.4 537.2,794.1 551.5,778.0 565.5,762.3 579.0,746.7 592.4,731.0 605.6,715.2 618.7,699.2 631.6,683.1 644.3,666.8 657.2,650.1 670.4,632.8 683.6,615.5 696.9,598.1 710.2,580.8 723.9,562.9 738.3,544.7 753.2,526.9 768.6,509.6 784.2,492.5 800.0,475.6 816.0,459.0 831.7,443.1 847.0,427.7 862.2,412.3 877.4,396.9 892.4,381.6 907.1,366.4 921.8,351.1 936.1,336.1 949.8,321.2 963.3,306.1 976.5,290.8 989.7,275.0 1002.9,258.7 1015.9,242.0 1028.8,224.6 1042.0,206.9 1055.4,189.3 1068.7,171.7 1082.3,154.1 1095.9,136.6 1109.5,119.3 1122.8,102.3 1136.1,85.3 1149.4,68.3 1162.6,51.3 1175.7,34.3 1188.7,17.3 1201.6,0.2 1212.7,-14.7 1222.0,-27.1 1229.5,-37.1" fill="#1f1f1f" filter="url(#b40)"/>
<polygon points="1452.4,120.8 1445.2,131.0 1436.3,143.6 1425.4,159.0 1412.3,177.4 1398.9,196.0 1385.6,214.2 1372.5,232.1 1359.3,250.0 1346.1,267.9 1332.9,285.6 1320.2,302.7 1308.0,319.3 1295.8,336.0 1283.6,353.0 1271.4,370.1 1259.3,387.2 1246.6,405.2 1233.2,424.0 1219.3,443.2 1204.7,463.0 1189.3,482.9 1173.7,502.6 1157.7,522.0 1142.0,540.4 1127.0,557.8 1111.8,575.1 1096.8,592.0 1082.1,608.5 1067.4,624.9 1052.8,641.3 1039.0,656.6 1026.4,671.0 1014.1,685.5 1002.0,700.1 990.1,714.8 978.5,729.7 967.1,744.8 955.1,761.1 942.2,778.5 929.4,795.9 916.6,813.4 903.7,831.0 890.2,849.4 875.9,868.5 861.4,887.4 846.7,906.1 831.8,924.7 816.7,943.2 801.5,961.4 786.5,979.0 772.0,995.9 758.0,1012.2 744.6,1027.8 731.5,1043.4 718.5,1059.1 705.5,1075.0 694.6,1088.4 686.2,1099.0 679.4,1107.8 442.3,923.9 450.4,913.6 460.7,900.6 472.8,885.6 487.0,868.3 501.3,851.1 515.7,833.9 530.2,816.9 544.5,800.3 558.5,784.0 572.2,768.0 585.5,752.0 598.6,736.0 611.5,719.9 624.3,703.6 636.9,687.1 649.3,670.6 661.9,653.5 674.7,636.0 687.6,618.4 700.5,600.8 713.5,583.2 726.8,565.1 740.8,546.7 755.1,528.4 769.6,510.4 784.3,492.6 799.3,475.0 814.5,457.7 829.4,441.0 843.8,424.9 858.2,408.8 872.6,392.6 886.8,376.7 900.7,360.8 914.5,344.8 927.8,329.2 940.6,313.8 953.0,298.1 965.2,282.2 977.3,265.9 989.5,249.1 1001.7,231.9 1014.1,214.2 1026.9,196.2 1039.8,178.1 1052.8,160.1 1065.9,142.1 1079.1,124.1 1092.3,106.5 1105.1,89.2 1117.9,71.9 1130.7,54.6 1143.4,37.2 1156.0,20.0 1168.4,2.8 1180.7,-14.6 1191.5,-29.8 1200.4,-42.4 1207.6,-52.6" fill="#0f0f0f" filter="url(#b60)"/>
<polygon points="1320.4,27.3 1313.7,37.8 1305.2,50.8 1295.0,66.5 1283.1,84.9 1270.9,103.2 1258.7,121.5 1246.5,139.6 1234.2,157.7 1221.8,175.7 1209.4,193.7 1197.1,211.5 1185.0,229.3 1173.0,247.1 1161.0,265.1 1149.1,283.1 1137.3,301.1 1125.4,319.4 1112.9,337.7 1099.8,355.6 1086.3,373.6 1072.4,391.5 1058.3,409.1 1043.8,426.5 1029.2,443.4 1014.7,460.1 1000.0,476.6 985.4,493.0 970.8,509.2 956.2,525.4 941.5,541.6 927.1,557.5 913.2,573.3 899.4,589.2 885.9,605.4 872.7,621.7 859.9,638.3 847.6,655.4 835.4,673.0 823.0,690.8 810.5,708.6 798.2,726.5 785.7,744.4 773.1,762.5 760.2,780.7 747.1,798.7 733.7,816.6 720.2,834.4 706.5,852.1 692.6,869.5 678.6,886.7 664.8,903.7 651.0,920.5 637.5,937.1 624.2,953.8 611.0,970.5 597.8,987.3 586.5,1001.7 577.4,1013.5 570.2,1023.1 472.6,947.4 480.6,937.3 490.8,924.8 503.0,910.2 517.3,893.3 531.8,876.6 546.5,860.0 561.3,843.5 575.9,827.3 590.4,811.3 604.7,795.3 618.6,779.5 632.5,763.4 646.1,747.2 659.6,730.9 672.9,714.5 686.1,697.9 699.2,680.9 712.5,663.7 725.9,646.5 739.3,629.3 752.6,612.1 766.2,594.6 780.2,577.0 794.2,559.4 808.2,541.9 822.4,524.5 836.9,507.4 851.5,490.5 866.1,474.0 880.5,457.8 894.9,441.5 909.2,425.3 923.5,409.1 937.5,392.9 951.4,376.6 965.1,360.5 978.3,344.3 991.1,327.9 1003.8,311.3 1016.2,294.4 1028.5,277.1 1041.3,259.9 1054.4,242.6 1067.7,225.2 1081.1,207.8 1094.6,190.4 1108.2,173.1 1121.9,155.8 1135.5,138.7 1149.1,121.8 1162.6,104.9 1176.1,87.9 1189.6,71.0 1203.0,54.0 1216.3,37.1 1229.5,20.0 1240.9,5.3 1250.4,-7.0 1258.0,-16.9" fill="#808080" filter="url(#b30)"/>
<ellipse cx="738" cy="614" rx="46" ry="20" fill="#fff" fill-opacity="0.26" transform="rotate(-12 738 614)" filter="url(#b9)"/>
<ellipse cx="745" cy="645" rx="14" ry="26" fill="#fff" fill-opacity="0.12" transform="rotate(-20 745 645)" filter="url(#b9)"/>
<ellipse cx="1185" cy="150" rx="55" ry="26" fill="#fff" fill-opacity="0.28" transform="rotate(-58 1185 150)" filter="url(#b20)"/>
<ellipse cx="950" cy="440" rx="110" ry="36" fill="#fff" fill-opacity="0.36" transform="rotate(-51.3 950 440)" filter="url(#b20)"/>
<ellipse cx="850" cy="570" rx="70" ry="34" fill="#fff" fill-opacity="0.32" transform="rotate(-51.3 850 570)" filter="url(#b20)"/>
<ellipse cx="770" cy="665" rx="45" ry="32" fill="#fff" fill-opacity="0.25" transform="rotate(-51.3 770 665)" filter="url(#b16)"/>
<ellipse cx="590" cy="900" rx="50" ry="30" fill="#fff" fill-opacity="0.15" transform="rotate(-51.3 590 900)" filter="url(#b16)"/>
<ellipse cx="1040" cy="320" rx="40" ry="22" fill="#fff" fill-opacity="0.1" transform="rotate(-51.3 1040 320)" filter="url(#b16)"/>
<ellipse cx="830" cy="634" rx="22" ry="27" fill="#fff" fill-opacity="0.62" transform="rotate(-30 830 634)" filter="url(#b7)"/>
<ellipse cx="825" cy="640" rx="11" ry="10" fill="#fff" fill-opacity="0.9" transform="rotate(-40 825 640)" filter="url(#b4)"/>
<ellipse cx="894" cy="524" rx="14" ry="14" fill="#fff" fill-opacity="0.6" transform="rotate(0 894 524)" filter="url(#b5)"/>
</g>
<path d="M1114.5 175.0h3.4v3.4h-3.4zM1117.8 175.0h3.4v3.4h-3.4zM1111.1 178.3h3.4v3.4h-3.4zM1121.2 178.3h3.4v3.4h-3.4zM1107.7 181.7h3.4v3.4h-3.4zM1124.6 181.7h3.4v3.4h-3.4zM1127.9 181.7h3.4v3.4h-3.4zM1131.3 181.7h3.4v3.4h-3.4zM1134.6 181.7h3.4v3.4h-3.4zM1138.0 181.7h3.4v3.4h-3.4zM1107.7 185.1h3.4v3.4h-3.4zM1141.4 185.1h3.4v3.4h-3.4zM1107.7 188.4h3.4v3.4h-3.4zM1144.7 188.4h3.4v3.4h-3.4zM1148.1 188.4h3.4v3.4h-3.4zM1151.5 188.4h3.4v3.4h-3.4zM1104.4 191.8h3.4v3.4h-3.4zM1154.8 191.8h3.4v3.4h-3.4zM1104.4 195.2h3.4v3.4h-3.4zM1151.5 195.2h3.4v3.4h-3.4zM1107.7 198.5h3.4v3.4h-3.4zM1148.1 198.5h3.4v3.4h-3.4zM1107.7 201.9h3.4v3.4h-3.4zM1144.7 201.9h3.4v3.4h-3.4zM1107.7 205.3h3.4v3.4h-3.4zM1144.7 205.3h3.4v3.4h-3.4zM1111.1 208.6h3.4v3.4h-3.4zM1144.7 208.6h3.4v3.4h-3.4zM1107.7 212.0h3.4v3.4h-3.4zM1144.7 212.0h3.4v3.4h-3.4zM1107.7 215.3h3.4v3.4h-3.4zM1144.7 215.3h3.4v3.4h-3.4zM1107.7 218.7h3.4v3.4h-3.4zM1148.1 218.7h3.4v3.4h-3.4zM1107.7 222.1h3.4v3.4h-3.4zM1144.7 222.1h3.4v3.4h-3.4zM1104.4 225.4h3.4v3.4h-3.4zM1144.7 225.4h3.4v3.4h-3.4zM1101.0 228.8h3.4v3.4h-3.4zM1144.7 228.8h3.4v3.4h-3.4zM1101.0 232.2h3.4v3.4h-3.4zM1141.4 232.2h3.4v3.4h-3.4zM1097.6 235.5h3.4v3.4h-3.4zM1138.0 235.5h3.4v3.4h-3.4zM1094.3 238.9h3.4v3.4h-3.4zM1131.3 238.9h3.4v3.4h-3.4zM1134.6 238.9h3.4v3.4h-3.4zM1094.3 242.2h3.4v3.4h-3.4zM1127.9 242.2h3.4v3.4h-3.4zM1090.9 245.6h3.4v3.4h-3.4zM1124.6 245.6h3.4v3.4h-3.4zM1090.9 249.0h3.4v3.4h-3.4zM1121.2 249.0h3.4v3.4h-3.4zM1087.6 252.3h3.4v3.4h-3.4zM1114.5 252.3h3.4v3.4h-3.4zM1117.8 252.3h3.4v3.4h-3.4zM1087.6 255.7h3.4v3.4h-3.4zM1111.1 255.7h3.4v3.4h-3.4zM1084.2 259.1h3.4v3.4h-3.4zM1107.7 259.1h3.4v3.4h-3.4zM1084.2 262.4h3.4v3.4h-3.4zM1104.4 262.4h3.4v3.4h-3.4zM1080.8 265.8h3.4v3.4h-3.4zM1101.0 265.8h3.4v3.4h-3.4zM1077.5 269.2h3.4v3.4h-3.4zM1094.3 269.2h3.4v3.4h-3.4zM1097.6 269.2h3.4v3.4h-3.4zM1070.7 272.5h3.4v3.4h-3.4zM1074.1 272.5h3.4v3.4h-3.4zM1090.9 272.5h3.4v3.4h-3.4zM1067.4 275.9h3.4v3.4h-3.4zM1087.6 275.9h3.4v3.4h-3.4zM1064.0 279.2h3.4v3.4h-3.4zM1084.2 279.2h3.4v3.4h-3.4zM1064.0 282.6h3.4v3.4h-3.4zM1080.8 282.6h3.4v3.4h-3.4zM1064.0 286.0h3.4v3.4h-3.4zM1080.8 286.0h3.4v3.4h-3.4zM1064.0 289.3h3.4v3.4h-3.4zM1077.5 289.3h3.4v3.4h-3.4zM1067.4 292.7h3.4v3.4h-3.4zM1070.7 292.7h3.4v3.4h-3.4zM1074.1 292.7h3.4v3.4h-3.4zM1077.5 292.7h3.4v3.4h-3.4z" fill="#d040c8" fill-opacity="1"/>
<path d="M979.9 363.3h3.4v3.4h-3.4zM976.6 366.7h3.4v3.4h-3.4zM983.3 366.7h3.4v3.4h-3.4zM973.2 370.1h3.4v3.4h-3.4zM986.7 370.1h3.4v3.4h-3.4zM969.8 373.4h3.4v3.4h-3.4zM986.7 373.4h3.4v3.4h-3.4zM966.5 376.8h3.4v3.4h-3.4zM986.7 376.8h3.4v3.4h-3.4zM959.8 380.1h3.4v3.4h-3.4zM963.1 380.1h3.4v3.4h-3.4zM990.0 380.1h3.4v3.4h-3.4zM956.4 383.5h3.4v3.4h-3.4zM990.0 383.5h3.4v3.4h-3.4zM956.4 386.9h3.4v3.4h-3.4zM993.4 386.9h3.4v3.4h-3.4zM953.0 390.2h3.4v3.4h-3.4zM996.8 390.2h3.4v3.4h-3.4zM949.7 393.6h3.4v3.4h-3.4zM996.8 393.6h3.4v3.4h-3.4zM946.3 397.0h3.4v3.4h-3.4zM996.8 397.0h3.4v3.4h-3.4zM929.5 400.3h3.4v3.4h-3.4zM932.8 400.3h3.4v3.4h-3.4zM936.2 400.3h3.4v3.4h-3.4zM939.6 400.3h3.4v3.4h-3.4zM942.9 400.3h3.4v3.4h-3.4zM996.8 400.3h3.4v3.4h-3.4zM929.5 403.7h3.4v3.4h-3.4zM993.4 403.7h3.4v3.4h-3.4zM926.1 407.1h3.4v3.4h-3.4zM990.0 407.1h3.4v3.4h-3.4zM922.8 410.4h3.4v3.4h-3.4zM986.7 410.4h3.4v3.4h-3.4zM922.8 413.8h3.4v3.4h-3.4zM979.9 413.8h3.4v3.4h-3.4zM983.3 413.8h3.4v3.4h-3.4zM922.8 417.1h3.4v3.4h-3.4zM976.6 417.1h3.4v3.4h-3.4zM919.4 420.5h3.4v3.4h-3.4zM976.6 420.5h3.4v3.4h-3.4zM919.4 423.9h3.4v3.4h-3.4zM976.6 423.9h3.4v3.4h-3.4zM919.4 427.2h3.4v3.4h-3.4zM973.2 427.2h3.4v3.4h-3.4zM916.0 430.6h3.4v3.4h-3.4zM973.2 430.6h3.4v3.4h-3.4zM916.0 434.0h3.4v3.4h-3.4zM973.2 434.0h3.4v3.4h-3.4zM916.0 437.3h3.4v3.4h-3.4zM973.2 437.3h3.4v3.4h-3.4zM912.7 440.7h3.4v3.4h-3.4zM973.2 440.7h3.4v3.4h-3.4zM909.3 444.0h3.4v3.4h-3.4zM969.8 444.0h3.4v3.4h-3.4zM905.9 447.4h3.4v3.4h-3.4zM956.4 447.4h3.4v3.4h-3.4zM959.8 447.4h3.4v3.4h-3.4zM963.1 447.4h3.4v3.4h-3.4zM966.5 447.4h3.4v3.4h-3.4zM905.9 450.8h3.4v3.4h-3.4zM953.0 450.8h3.4v3.4h-3.4zM902.6 454.1h3.4v3.4h-3.4zM949.7 454.1h3.4v3.4h-3.4zM902.6 457.5h3.4v3.4h-3.4zM946.3 457.5h3.4v3.4h-3.4zM899.2 460.9h3.4v3.4h-3.4zM942.9 460.9h3.4v3.4h-3.4zM895.9 464.2h3.4v3.4h-3.4zM936.2 464.2h3.4v3.4h-3.4zM939.6 464.2h3.4v3.4h-3.4zM892.5 467.6h3.4v3.4h-3.4zM916.0 467.6h3.4v3.4h-3.4zM919.4 467.6h3.4v3.4h-3.4zM922.8 467.6h3.4v3.4h-3.4zM926.1 467.6h3.4v3.4h-3.4zM929.5 467.6h3.4v3.4h-3.4zM932.8 467.6h3.4v3.4h-3.4zM889.1 471.0h3.4v3.4h-3.4zM909.3 471.0h3.4v3.4h-3.4zM912.7 471.0h3.4v3.4h-3.4zM885.8 474.3h3.4v3.4h-3.4zM905.9 474.3h3.4v3.4h-3.4zM885.8 477.7h3.4v3.4h-3.4zM902.6 477.7h3.4v3.4h-3.4zM882.4 481.0h3.4v3.4h-3.4zM902.6 481.0h3.4v3.4h-3.4zM882.4 484.4h3.4v3.4h-3.4zM905.9 484.4h3.4v3.4h-3.4zM882.4 487.8h3.4v3.4h-3.4zM909.3 487.8h3.4v3.4h-3.4zM882.4 491.1h3.4v3.4h-3.4zM909.3 491.1h3.4v3.4h-3.4zM885.8 494.5h3.4v3.4h-3.4zM912.7 494.5h3.4v3.4h-3.4zM889.1 497.9h3.4v3.4h-3.4zM916.0 497.9h3.4v3.4h-3.4zM892.5 501.2h3.4v3.4h-3.4zM916.0 501.2h3.4v3.4h-3.4zM895.9 504.6h3.4v3.4h-3.4zM919.4 504.6h3.4v3.4h-3.4zM895.9 507.9h3.4v3.4h-3.4zM919.4 507.9h3.4v3.4h-3.4zM899.2 511.3h3.4v3.4h-3.4zM919.4 511.3h3.4v3.4h-3.4zM899.2 514.7h3.4v3.4h-3.4zM919.4 514.7h3.4v3.4h-3.4zM902.6 518.0h3.4v3.4h-3.4zM919.4 518.0h3.4v3.4h-3.4zM905.9 521.4h3.4v3.4h-3.4zM919.4 521.4h3.4v3.4h-3.4zM905.9 524.8h3.4v3.4h-3.4zM909.3 524.8h3.4v3.4h-3.4zM916.0 524.8h3.4v3.4h-3.4zM912.7 528.1h3.4v3.4h-3.4z" fill="#0a3cf0" fill-opacity="1"/>
<path d="M1057.3 299.4h3.4v3.4h-3.4zM1050.6 302.8h3.4v3.4h-3.4zM1053.9 302.8h3.4v3.4h-3.4zM1060.7 302.8h3.4v3.4h-3.4zM1047.2 306.2h3.4v3.4h-3.4zM1064.0 306.2h3.4v3.4h-3.4zM1047.2 309.5h3.4v3.4h-3.4zM1064.0 309.5h3.4v3.4h-3.4zM1050.6 312.9h3.4v3.4h-3.4zM1060.7 312.9h3.4v3.4h-3.4zM1053.9 316.2h3.4v3.4h-3.4zM1057.3 316.2h3.4v3.4h-3.4z" fill="#3a1a78" fill-opacity="1"/>
<path d="M1000.1 346.5h3.4v3.4h-3.4zM1003.5 346.5h3.4v3.4h-3.4zM996.8 349.9h3.4v3.4h-3.4zM1006.8 349.9h3.4v3.4h-3.4zM993.4 353.2h3.4v3.4h-3.4zM1010.2 353.2h3.4v3.4h-3.4zM990.0 356.6h3.4v3.4h-3.4zM1010.2 356.6h3.4v3.4h-3.4zM993.4 360.0h3.4v3.4h-3.4zM1006.8 360.0h3.4v3.4h-3.4zM996.8 363.3h3.4v3.4h-3.4zM1006.8 363.3h3.4v3.4h-3.4zM1000.1 366.7h3.4v3.4h-3.4zM1003.5 366.7h3.4v3.4h-3.4z" fill="#c8b458" fill-opacity="0.85"/>
<path d="M1016.9 420.5h3.4v3.4h-3.4zM1013.6 423.9h3.4v3.4h-3.4zM1020.3 423.9h3.4v3.4h-3.4zM1023.7 423.9h3.4v3.4h-3.4zM1013.6 427.2h3.4v3.4h-3.4zM1027.0 427.2h3.4v3.4h-3.4zM1010.2 430.6h3.4v3.4h-3.4zM1027.0 430.6h3.4v3.4h-3.4zM1006.8 434.0h3.4v3.4h-3.4zM1023.7 434.0h3.4v3.4h-3.4zM1003.5 437.3h3.4v3.4h-3.4zM1020.3 437.3h3.4v3.4h-3.4zM1000.1 440.7h3.4v3.4h-3.4zM1016.9 440.7h3.4v3.4h-3.4zM1000.1 444.0h3.4v3.4h-3.4zM1016.9 444.0h3.4v3.4h-3.4zM1000.1 447.4h3.4v3.4h-3.4zM1013.6 447.4h3.4v3.4h-3.4zM1003.5 450.8h3.4v3.4h-3.4zM1006.8 450.8h3.4v3.4h-3.4zM1010.2 450.8h3.4v3.4h-3.4z" fill="#b8e890" fill-opacity="0.85"/>
<path d="M858.9 507.9h3.4v3.4h-3.4zM862.2 507.9h3.4v3.4h-3.4zM855.5 511.3h3.4v3.4h-3.4zM865.6 511.3h3.4v3.4h-3.4zM852.1 514.7h3.4v3.4h-3.4zM868.9 514.7h3.4v3.4h-3.4zM848.8 518.0h3.4v3.4h-3.4zM865.6 518.0h3.4v3.4h-3.4zM845.4 521.4h3.4v3.4h-3.4zM862.2 521.4h3.4v3.4h-3.4zM842.0 524.8h3.4v3.4h-3.4zM858.9 524.8h3.4v3.4h-3.4zM838.7 528.1h3.4v3.4h-3.4zM858.9 528.1h3.4v3.4h-3.4zM835.3 531.5h3.4v3.4h-3.4zM855.5 531.5h3.4v3.4h-3.4zM831.9 534.9h3.4v3.4h-3.4zM852.1 534.9h3.4v3.4h-3.4zM828.6 538.2h3.4v3.4h-3.4zM848.8 538.2h3.4v3.4h-3.4zM825.2 541.6h3.4v3.4h-3.4zM845.4 541.6h3.4v3.4h-3.4zM825.2 544.9h3.4v3.4h-3.4zM828.6 544.9h3.4v3.4h-3.4zM842.0 544.9h3.4v3.4h-3.4zM831.9 548.3h3.4v3.4h-3.4zM838.7 548.3h3.4v3.4h-3.4zM835.3 551.7h3.4v3.4h-3.4z" fill="#b070b8" fill-opacity="0.9"/>
<path d="M838.7 595.4h3.4v3.4h-3.4zM842.0 595.4h3.4v3.4h-3.4zM831.9 598.8h3.4v3.4h-3.4zM835.3 598.8h3.4v3.4h-3.4zM845.4 598.8h3.4v3.4h-3.4zM825.2 602.1h3.4v3.4h-3.4zM828.6 602.1h3.4v3.4h-3.4zM848.8 602.1h3.4v3.4h-3.4zM821.9 605.5h3.4v3.4h-3.4zM852.1 605.5h3.4v3.4h-3.4zM821.9 608.8h3.4v3.4h-3.4zM855.5 608.8h3.4v3.4h-3.4zM818.5 612.2h3.4v3.4h-3.4zM858.9 612.2h3.4v3.4h-3.4zM815.1 615.6h3.4v3.4h-3.4zM858.9 615.6h3.4v3.4h-3.4zM815.1 618.9h3.4v3.4h-3.4zM862.2 618.9h3.4v3.4h-3.4zM815.1 622.3h3.4v3.4h-3.4zM862.2 622.3h3.4v3.4h-3.4zM818.5 625.7h3.4v3.4h-3.4zM865.6 625.7h3.4v3.4h-3.4zM821.9 629.0h3.4v3.4h-3.4zM862.2 629.0h3.4v3.4h-3.4zM825.2 632.4h3.4v3.4h-3.4zM855.5 632.4h3.4v3.4h-3.4zM858.9 632.4h3.4v3.4h-3.4zM828.6 635.8h3.4v3.4h-3.4zM852.1 635.8h3.4v3.4h-3.4zM831.9 639.1h3.4v3.4h-3.4zM845.4 639.1h3.4v3.4h-3.4zM848.8 639.1h3.4v3.4h-3.4zM835.3 642.5h3.4v3.4h-3.4zM838.7 642.5h3.4v3.4h-3.4zM842.0 642.5h3.4v3.4h-3.4z" fill="#8c5a2c" fill-opacity="1"/>
<path d="M697.4 790.5h3.4v3.4h-3.4zM694.1 793.8h3.4v3.4h-3.4zM700.8 793.8h3.4v3.4h-3.4zM704.1 793.8h3.4v3.4h-3.4zM690.7 797.2h3.4v3.4h-3.4zM707.5 797.2h3.4v3.4h-3.4zM710.9 797.2h3.4v3.4h-3.4zM687.3 800.6h3.4v3.4h-3.4zM710.9 800.6h3.4v3.4h-3.4zM684.0 803.9h3.4v3.4h-3.4zM714.2 803.9h3.4v3.4h-3.4zM687.3 807.3h3.4v3.4h-3.4zM710.9 807.3h3.4v3.4h-3.4zM690.7 810.6h3.4v3.4h-3.4zM710.9 810.6h3.4v3.4h-3.4zM690.7 814.0h3.4v3.4h-3.4zM694.1 814.0h3.4v3.4h-3.4zM697.4 814.0h3.4v3.4h-3.4zM700.8 814.0h3.4v3.4h-3.4zM704.1 814.0h3.4v3.4h-3.4zM707.5 814.0h3.4v3.4h-3.4z" fill="#9aa0d8" fill-opacity="0.6"/>
</svg><div class="t" style="left:355px;top:946px;font-size:14px;line-height:15px;color:#f0f1f2">1</div>
<div class="btn" style="left:372px;top:946px;width:15px;height:15px;background:#414851;border-radius:2px"></div>
<svg style="left:372px;top:946px" width="15" height="15"><path d="M4.5 3L11.5 7.5L4.5 12Z" fill="#d1d2d4"/></svg>
<div class="btn" style="left:391px;top:946px;width:13px;height:15px;background:#414851;border-radius:2px"></div>
<svg style="left:391px;top:946px" width="13" height="15"><path d="M3.5 3.5H5V11.5H3.5Z M10 3.5V11.5L5 7.5Z" fill="#d1d2d4"/></svg>
<div class="a" style="left:407px;top:946px;width:737px;height:15px;background:#414851;border-radius:3px"></div>
<div class="a" style="left:512px;top:947px;width:26px;height:13px;background:#868e96;border-radius:3px"></div>
<div class="btn" style="left:1147px;top:946px;width:13px;height:15px;background:#414851;border-radius:2px"></div>
<svg style="left:1147px;top:946px" width="13" height="15"><path d="M3 3.5L8 7.5L3 11.5Z M8 3.5H10V11.5H8Z" fill="#d1d2d4"/></svg>
<div class="t" style="right:738px;top:946px;font-size:14px;line-height:15px;color:#b8bcc0">6</div>
<div class="a" style="left:1187px;top:946px;width:1px;height:14px;background:#868e93"></div>
<div class="t" style="left:1195px;top:946px;font-size:14px;line-height:15px;color:#b8bcc0">41</div>
<div class="t" style="left:355px;top:969px;font-size:14px;line-height:15px;color:#f0f1f2">0</div>
<div class="btn" style="left:372px;top:969px;width:15px;height:15px;background:#414851;border-radius:2px"></div>
<svg style="left:372px;top:969px" width="15" height="15"><path d="M4.5 3L11.5 7.5L4.5 12Z" fill="#d1d2d4"/></svg>
<div class="btn" style="left:391px;top:969px;width:13px;height:15px;background:#414851;border-radius:2px"></div>
<svg style="left:391px;top:969px" width="13" height="15"><path d="M3.5 3.5H5V11.5H3.5Z M10 3.5V11.5L5 7.5Z" fill="#d1d2d4"/></svg>
<div class="a" style="left:407px;top:969px;width:737px;height:15px;background:#414851;border-radius:3px"></div>
<div class="a" style="left:754px;top:970px;width:26px;height:13px;background:#868e96;border-radius:3px"></div>
<div class="btn" style="left:1147px;top:969px;width:13px;height:15px;background:#414851;border-radius:2px"></div>
<svg style="left:1147px;top:969px" width="13" height="15"><path d="M3 3.5L8 7.5L3 11.5Z M8 3.5H10V11.5H8Z" fill="#d1d2d4"/></svg>
<div class="t" style="right:738px;top:969px;font-size:14px;line-height:15px;color:#b8bcc0">20</div>
<div class="a" style="left:1187px;top:969px;width:1px;height:14px;background:#868e93"></div>
<div class="t" style="left:1195px;top:969px;font-size:14px;line-height:15px;color:#b8bcc0">41</div>
<div class="t" style="left:919px;top:996px;font-size:15.3px;line-height:16px">use &lt;1&gt; for activate the label eraser, use &lt;2&gt; for activate the paint brush, use &lt;3&gt; for activate the fill bucket, use &lt;4&gt; for pick mode</div>
<svg style="left:1847px;top:1000px" width="9" height="6"><path d="M0.5 5.5L4.5 1L8.5 5.5Z" fill="#a8acb2"/></svg>
<div class="t" style="left:1858px;top:996px;font-size:15px;line-height:16px">activity</div><svg style="left:1233px;top:32px" width="7" height="7"><path d="M0.7 0.7L6.3 6.3M6.3 0.7L0.7 6.3" stroke="#f0f1f2" stroke-width="1.3"/></svg>
<svg style="left:1248px;top:32px" width="9" height="7"><path d="M0.6 3.5 Q4.5 -0.5 8.4 3.5 Q4.5 7.5 0.6 3.5Z" fill="none" stroke="#c8cacd" stroke-width="1.2"/><circle cx="4.5" cy="3.5" r="1.4" fill="#c8cacd"/><path d="M1 6.5L8 0.5" stroke="#c8cacd" stroke-width="0.9"/></svg>
<svg style="left:1264px;top:31px" width="9" height="8"><rect x="0.7" y="0.7" width="5.6" height="5" fill="none" stroke="#c8cacd" stroke-width="1.4"/><path d="M7.8 2.3V7H2.3" fill="none" stroke="#c8cacd" stroke-width="1.1"/></svg>
<div class="hl" style="left:1278px;top:35px;width:435px;background:#4a515a"></div>
<div class="ttl" style="right:15px;top:29px">Stat profiles (domb-napari)</div>
<div class="t" style="left:1235px;top:58px">img 0</div>
<div class="a" style="left:1333px;top:53px;width:578px;height:25px;background:#414851;border-radius:3px"></div>
<div class="t" style="left:1341px;top:58px">24_03_14_03_ch0</div>
<div class="a" style="left:1890px;top:61px;border-left:7px solid transparent;border-right:7px solid transparent;border-top:8px solid #d1d2d4"></div>
<div class="t" style="left:1235px;top:89px">img 1</div>
<div class="a" style="left:1333px;top:84px;width:578px;height:25px;background:#414851;border-radius:3px"></div>
<div class="t" style="left:1341px;top:89px">24_03_14_03_ch1</div>
<div class="a" style="left:1890px;top:92px;border-left:7px solid transparent;border-right:7px solid transparent;border-top:8px solid #d1d2d4"></div>
<div class="t" style="left:1235px;top:120px">img 2</div>
<div class="a" style="left:1333px;top:115px;width:578px;height:25px;background:#414851;border-radius:3px"></div>
<div class="t" style="left:1341px;top:120px">24_03_14_03_ch3</div>
<div class="a" style="left:1890px;top:123px;border-left:7px solid transparent;border-right:7px solid transparent;border-top:8px solid #d1d2d4"></div>
<div class="t" style="left:1235px;top:151px">labels</div>
<div class="a" style="left:1333px;top:146px;width:578px;height:25px;background:#414851;border-radius:3px"></div>
<div class="t" style="left:1341px;top:151px">24_03_14_03_Eapp_norm_red-green_up-labels</div>
<div class="a" style="left:1890px;top:154px;border-left:7px solid transparent;border-right:7px solid transparent;border-top:8px solid #d1d2d4"></div>
<div class="t" style="left:1235px;top:182px">profiles num</div>
<div class="a" style="left:1333px;top:177px;width:578px;height:25px;background:#414851;border-radius:3px"></div>
<div class="t" style="left:1341px;top:182px">3</div>
<div class="a" style="left:1890px;top:185px;border-left:7px solid transparent;border-right:7px solid transparent;border-top:8px solid #d1d2d4"></div>
<div class="cb" style="left:1231px;top:209px;background:#414851"></div>
<svg style="left:1233px;top:212px" width="14" height="12"><path d="M1.5 6.5L5 10L12.5 1.5" fill="none" stroke="#d1d2d4" stroke-width="2"/></svg>
<div class="t" style="left:1254px;top:211px">absolute intensity</div>
<div class="t" style="left:1235px;top:236px">time scale</div>
<div class="a" style="left:1333px;top:234px;width:578px;height:20px;background:#414851;border-radius:3px"></div>
<div class="a" style="left:1338px;top:243px;width:10px;height:2px;background:#a6abb1"></div>
<svg style="left:1895px;top:239px" width="10" height="10"><path d="M5 0V10M0 5H10" stroke="#a6abb1" stroke-width="1.8"/></svg>
<div class="t" style="left:1365px;top:238px">5,00</div>
<div class="t" style="left:1235px;top:262px">ΔF win</div>
<div class="a" style="left:1333px;top:260px;width:578px;height:20px;background:#414851;border-radius:3px"></div>
<div class="a" style="left:1338px;top:269px;width:10px;height:2px;background:#a6abb1"></div>
<svg style="left:1895px;top:265px" width="10" height="10"><path d="M5 0V10M0 5H10" stroke="#a6abb1" stroke-width="1.8"/></svg>
<div class="t" style="left:1365px;top:264px">5</div>
<div class="t" style="left:1235px;top:292px">stat method</div>
<div class="a" style="left:1333px;top:287px;width:578px;height:24px;background:#414851;border-radius:3px"></div>
<div class="t" style="left:1341px;top:292px">se</div>
<div class="a" style="left:1890px;top:295px;border-left:7px solid transparent;border-right:7px solid transparent;border-top:8px solid #d1d2d4"></div>
<div class="a" style="left:1230px;top:317px;width:681px;height:25px;background:#414851;border-radius:3px"></div>
<div class="t" style="left:1230px;width:681px;text-align:center;top:322px">Build Profile</div>
<div class="a" style="left:1564px;top:352px;width:3px;height:3px;border-radius:2px;background:#d1d2d4"></div>
<div class="a" style="left:1569px;top:352px;width:3px;height:3px;border-radius:2px;background:#d1d2d4"></div>
<div class="a" style="left:1574px;top:352px;width:3px;height:3px;border-radius:2px;background:#d1d2d4"></div>
<svg style="left:1233px;top:363px" width="7" height="7"><path d="M0.7 0.7L6.3 6.3M6.3 0.7L0.7 6.3" stroke="#f0f1f2" stroke-width="1.3"/></svg>
<svg style="left:1248px;top:363px" width="9" height="7"><path d="M0.6 3.5 Q4.5 -0.5 8.4 3.5 Q4.5 7.5 0.6 3.5Z" fill="none" stroke="#c8cacd" stroke-width="1.2"/><circle cx="4.5" cy="3.5" r="1.4" fill="#c8cacd"/><path d="M1 6.5L8 0.5" stroke="#c8cacd" stroke-width="0.9"/></svg>
<svg style="left:1264px;top:362px" width="9" height="8"><rect x="0.7" y="0.7" width="5.6" height="5" fill="none" stroke="#c8cacd" stroke-width="1.4"/><path d="M7.8 2.3V7H2.3" fill="none" stroke="#c8cacd" stroke-width="1.1"/></svg>
<div class="hl" style="left:1278px;top:366px;width:555px;background:#4a515a"></div>
<div class="ttl" style="right:15px;top:360px">Stat Prof.</div>
<div class="a" style="left:1217px;top:500px;width:3px;height:3px;border-radius:2px;background:#d1d2d4"></div>
<div class="a" style="left:1217px;top:505px;width:3px;height:3px;border-radius:2px;background:#d1d2d4"></div>
<div class="a" style="left:1217px;top:510px;width:3px;height:3px;border-radius:2px;background:#d1d2d4"></div>
<div class="a" style="left:1220px;top:375px;width:700px;height:614px;background:#fff"></div><svg style="left:1220px;top:375px" width="700" height="614" viewBox="1220 375 700 614">
<rect x="1220" y="374" width="700" height="616" fill="#1d1f25"/><rect x="1221" y="375" width="699" height="614" fill="#fff"/>
<line x1="1333.0" y1="449" x2="1333.0" y2="920.5" stroke="#b0b0b0" stroke-opacity="0.4" stroke-width="1.2"/>
<line x1="1452.9" y1="449" x2="1452.9" y2="920.5" stroke="#b0b0b0" stroke-opacity="0.4" stroke-width="1.2"/>
<line x1="1572.8" y1="449" x2="1572.8" y2="920.5" stroke="#b0b0b0" stroke-opacity="0.4" stroke-width="1.2"/>
<line x1="1692.7" y1="449" x2="1692.7" y2="920.5" stroke="#b0b0b0" stroke-opacity="0.4" stroke-width="1.2"/>
<line x1="1812.6" y1="449" x2="1812.6" y2="920.5" stroke="#b0b0b0" stroke-opacity="0.4" stroke-width="1.2"/>
<line x1="1308.5" y1="862.6" x2="1850" y2="862.6" stroke="#b0b0b0" stroke-opacity="0.4" stroke-width="1.2"/>
<line x1="1303.5" y1="862.6" x2="1308.5" y2="862.6" stroke="#000" stroke-width="1"/>
<text x="1298" y="867.4" text-anchor="end" font-family="Liberation Sans" font-size="14.3" fill="#000">300</text>
<line x1="1308.5" y1="794.8" x2="1850" y2="794.8" stroke="#b0b0b0" stroke-opacity="0.4" stroke-width="1.2"/>
<line x1="1303.5" y1="794.8" x2="1308.5" y2="794.8" stroke="#000" stroke-width="1"/>
<text x="1298" y="799.5" text-anchor="end" font-family="Liberation Sans" font-size="14.3" fill="#000">400</text>
<line x1="1308.5" y1="726.9" x2="1850" y2="726.9" stroke="#b0b0b0" stroke-opacity="0.4" stroke-width="1.2"/>
<line x1="1303.5" y1="726.9" x2="1308.5" y2="726.9" stroke="#000" stroke-width="1"/>
<text x="1298" y="731.7" text-anchor="end" font-family="Liberation Sans" font-size="14.3" fill="#000">500</text>
<line x1="1308.5" y1="659.0" x2="1850" y2="659.0" stroke="#b0b0b0" stroke-opacity="0.4" stroke-width="1.2"/>
<line x1="1303.5" y1="659.0" x2="1308.5" y2="659.0" stroke="#000" stroke-width="1"/>
<text x="1298" y="663.8" text-anchor="end" font-family="Liberation Sans" font-size="14.3" fill="#000">600</text>
<line x1="1308.5" y1="591.1" x2="1850" y2="591.1" stroke="#b0b0b0" stroke-opacity="0.4" stroke-width="1.2"/>
<line x1="1303.5" y1="591.1" x2="1308.5" y2="591.1" stroke="#000" stroke-width="1"/>
<text x="1298" y="595.9" text-anchor="end" font-family="Liberation Sans" font-size="14.3" fill="#000">700</text>
<line x1="1308.5" y1="523.3" x2="1850" y2="523.3" stroke="#b0b0b0" stroke-opacity="0.4" stroke-width="1.2"/>
<line x1="1303.5" y1="523.3" x2="1308.5" y2="523.3" stroke="#000" stroke-width="1"/>
<text x="1298" y="528.1" text-anchor="end" font-family="Liberation Sans" font-size="14.3" fill="#000">800</text>
<line x1="1308.5" y1="455.4" x2="1850" y2="455.4" stroke="#b0b0b0" stroke-opacity="0.4" stroke-width="1.2"/>
<line x1="1303.5" y1="455.4" x2="1308.5" y2="455.4" stroke="#000" stroke-width="1"/>
<text x="1298" y="460.2" text-anchor="end" font-family="Liberation Sans" font-size="14.3" fill="#000">900</text>
<line x1="1333.0" y1="920.5" x2="1333.0" y2="925.5" stroke="#000" stroke-width="1"/>
<text x="1333.0" y="942" text-anchor="middle" font-family="Liberation Sans" font-size="14.3" fill="#000">0</text>
<line x1="1452.9" y1="920.5" x2="1452.9" y2="925.5" stroke="#000" stroke-width="1"/>
<text x="1452.9" y="942" text-anchor="middle" font-family="Liberation Sans" font-size="14.3" fill="#000">50</text>
<line x1="1572.8" y1="920.5" x2="1572.8" y2="925.5" stroke="#000" stroke-width="1"/>
<text x="1572.8" y="942" text-anchor="middle" font-family="Liberation Sans" font-size="14.3" fill="#000">100</text>
<line x1="1692.7" y1="920.5" x2="1692.7" y2="925.5" stroke="#000" stroke-width="1"/>
<text x="1692.7" y="942" text-anchor="middle" font-family="Liberation Sans" font-size="14.3" fill="#000">150</text>
<line x1="1812.6" y1="920.5" x2="1812.6" y2="925.5" stroke="#000" stroke-width="1"/>
<text x="1812.6" y="942" text-anchor="middle" font-family="Liberation Sans" font-size="14.3" fill="#000">200</text>
<line x1="1308.5" y1="449" x2="1308.5" y2="921" stroke="#000" stroke-width="1.1"/>
<line x1="1308" y1="920.5" x2="1850" y2="920.5" stroke="#000" stroke-width="1.1"/>
<text x="1579" y="962" text-anchor="middle" font-family="Liberation Sans" font-size="14.3" fill="#000">Time, s</text>
<text x="1579" y="441" text-anchor="middle" font-family="Liberation Sans" font-size="18.2" fill="#000">24_03_14_03_Eapp_norm_red-green_up-labels, method se</text>
<rect x="1255" y="686" width="9" height="1.3" fill="#000"/>
<polyline points="1333.0,852.4 1345.0,861.9 1357.0,862.6 1369.0,858.6 1381.0,864.1 1393.0,867.4 1404.9,860.1 1416.9,868.1 1428.9,874.3 1440.9,876.9 1452.9,886.0 1464.9,892.2 1476.9,890.7 1488.9,887.1 1500.9,885.6 1512.8,883.1 1524.8,884.9 1536.8,879.4 1548.8,881.2 1560.8,881.2 1572.8,879.8 1584.8,881.6 1596.8,883.4 1608.8,886.0 1620.8,882.3 1632.8,882.7 1644.7,881.6 1656.7,879.4 1668.7,880.5 1680.7,882.3 1692.7,878.7 1704.7,879.4 1716.7,879.8 1728.7,878.7 1740.7,879.8 1752.7,881.2 1764.6,881.2 1776.6,881.6 1788.6,883.1 1800.6,883.1 1812.6,882.3 1824.6,882.3" fill="none" stroke="#000" stroke-width="1.6" stroke-opacity="0.8"/><path d="M1333.0 844.8V860.1M1329.5 844.8h7M1329.5 860.1h7" stroke="#000" stroke-width="1.6" stroke-opacity="0.8" fill="none"/><path d="M1345.0 854.6V868.5M1341.5 854.6h7M1341.5 868.5h7" stroke="#000" stroke-width="1.6" stroke-opacity="0.8" fill="none"/><path d="M1357.0 855.4V869.2M1353.5 855.4h7M1353.5 869.2h7" stroke="#000" stroke-width="1.6" stroke-opacity="0.8" fill="none"/><path d="M1369.0 851.3V865.9M1365.5 851.3h7M1365.5 865.9h7" stroke="#000" stroke-width="1.6" stroke-opacity="0.8" fill="none"/><path d="M1381.0 856.8V871.4M1377.5 856.8h7M1377.5 871.4h7" stroke="#000" stroke-width="1.6" stroke-opacity="0.8" fill="none"/><path d="M1393.0 860.5V874.3M1389.5 860.5h7M1389.5 874.3h7" stroke="#000" stroke-width="1.6" stroke-opacity="0.8" fill="none"/><path d="M1404.9 852.4V867.8M1401.4 852.4h7M1401.4 867.8h7" stroke="#000" stroke-width="1.6" stroke-opacity="0.8" fill="none"/><path d="M1416.9 860.8V875.4M1413.4 860.8h7M1413.4 875.4h7" stroke="#000" stroke-width="1.6" stroke-opacity="0.8" fill="none"/><path d="M1428.9 866.7V882.3M1425.4 866.7h7M1425.4 882.3h7" stroke="#000" stroke-width="1.6" stroke-opacity="0.8" fill="none"/><path d="M1440.9 868.8V884.9M1437.4 868.8h7M1437.4 884.9h7" stroke="#000" stroke-width="1.6" stroke-opacity="0.8" fill="none"/><path d="M1452.9 878.0V894.0M1449.4 878.0h7M1449.4 894.0h7" stroke="#000" stroke-width="1.6" stroke-opacity="0.8" fill="none"/><path d="M1464.9 884.2V900.6M1461.4 884.2h7M1461.4 900.6h7" stroke="#000" stroke-width="1.6" stroke-opacity="0.8" fill="none"/><path d="M1476.9 882.3V899.1M1473.4 882.3h7M1473.4 899.1h7" stroke="#000" stroke-width="1.6" stroke-opacity="0.8" fill="none"/><path d="M1488.9 878.7V895.8M1485.4 878.7h7M1485.4 895.8h7" stroke="#000" stroke-width="1.6" stroke-opacity="0.8" fill="none"/><path d="M1500.9 876.9V894.7M1497.4 876.9h7M1497.4 894.7h7" stroke="#000" stroke-width="1.6" stroke-opacity="0.8" fill="none"/><path d="M1512.8 874.7V892.2M1509.3 874.7h7M1509.3 892.2h7" stroke="#000" stroke-width="1.6" stroke-opacity="0.8" fill="none"/><path d="M1524.8 876.1V893.6M1521.3 876.1h7M1521.3 893.6h7" stroke="#000" stroke-width="1.6" stroke-opacity="0.8" fill="none"/><path d="M1536.8 870.7V888.2M1533.3 870.7h7M1533.3 888.2h7" stroke="#000" stroke-width="1.6" stroke-opacity="0.8" fill="none"/><path d="M1548.8 872.1V890.4M1545.3 872.1h7M1545.3 890.4h7" stroke="#000" stroke-width="1.6" stroke-opacity="0.8" fill="none"/><path d="M1560.8 872.1V890.4M1557.3 872.1h7M1557.3 890.4h7" stroke="#000" stroke-width="1.6" stroke-opacity="0.8" fill="none"/><path d="M1572.8 870.3V889.3M1569.3 870.3h7M1569.3 889.3h7" stroke="#000" stroke-width="1.6" stroke-opacity="0.8" fill="none"/><path d="M1584.8 872.5V890.7M1581.3 872.5h7M1581.3 890.7h7" stroke="#000" stroke-width="1.6" stroke-opacity="0.8" fill="none"/><path d="M1596.8 874.3V892.9M1593.3 874.3h7M1593.3 892.9h7" stroke="#000" stroke-width="1.6" stroke-opacity="0.8" fill="none"/><path d="M1608.8 876.9V895.1M1605.3 876.9h7M1605.3 895.1h7" stroke="#000" stroke-width="1.6" stroke-opacity="0.8" fill="none"/><path d="M1620.8 873.2V891.4M1617.3 873.2h7M1617.3 891.4h7" stroke="#000" stroke-width="1.6" stroke-opacity="0.8" fill="none"/><path d="M1632.8 873.6V891.8M1629.2 873.6h7M1629.2 891.8h7" stroke="#000" stroke-width="1.6" stroke-opacity="0.8" fill="none"/><path d="M1644.7 872.1V890.7M1641.2 872.1h7M1641.2 890.7h7" stroke="#000" stroke-width="1.6" stroke-opacity="0.8" fill="none"/><path d="M1656.7 869.9V888.9M1653.2 869.9h7M1653.2 888.9h7" stroke="#000" stroke-width="1.6" stroke-opacity="0.8" fill="none"/><path d="M1668.7 871.4V890.0M1665.2 871.4h7M1665.2 890.0h7" stroke="#000" stroke-width="1.6" stroke-opacity="0.8" fill="none"/><path d="M1680.7 872.9V891.8M1677.2 872.9h7M1677.2 891.8h7" stroke="#000" stroke-width="1.6" stroke-opacity="0.8" fill="none"/><path d="M1692.7 869.2V888.2M1689.2 869.2h7M1689.2 888.2h7" stroke="#000" stroke-width="1.6" stroke-opacity="0.8" fill="none"/><path d="M1704.7 869.9V888.9M1701.2 869.9h7M1701.2 888.9h7" stroke="#000" stroke-width="1.6" stroke-opacity="0.8" fill="none"/><path d="M1716.7 870.3V889.3M1713.2 870.3h7M1713.2 889.3h7" stroke="#000" stroke-width="1.6" stroke-opacity="0.8" fill="none"/><path d="M1728.7 869.2V888.2M1725.2 869.2h7M1725.2 888.2h7" stroke="#000" stroke-width="1.6" stroke-opacity="0.8" fill="none"/><path d="M1740.7 870.3V889.3M1737.2 870.3h7M1737.2 889.3h7" stroke="#000" stroke-width="1.6" stroke-opacity="0.8" fill="none"/><path d="M1752.7 871.8V890.7M1749.2 871.8h7M1749.2 890.7h7" stroke="#000" stroke-width="1.6" stroke-opacity="0.8" fill="none"/><path d="M1764.6 871.8V890.7M1761.1 871.8h7M1761.1 890.7h7" stroke="#000" stroke-width="1.6" stroke-opacity="0.8" fill="none"/><path d="M1776.6 872.1V891.1M1773.1 872.1h7M1773.1 891.1h7" stroke="#000" stroke-width="1.6" stroke-opacity="0.8" fill="none"/><path d="M1788.6 873.6V892.5M1785.1 873.6h7M1785.1 892.5h7" stroke="#000" stroke-width="1.6" stroke-opacity="0.8" fill="none"/><path d="M1800.6 873.6V892.5M1797.1 873.6h7M1797.1 892.5h7" stroke="#000" stroke-width="1.6" stroke-opacity="0.8" fill="none"/><path d="M1812.6 872.9V891.8M1809.1 872.9h7M1809.1 891.8h7" stroke="#000" stroke-width="1.6" stroke-opacity="0.8" fill="none"/><path d="M1824.6 872.9V891.8M1821.1 872.9h7M1821.1 891.8h7" stroke="#000" stroke-width="1.6" stroke-opacity="0.8" fill="none"/><circle cx="1333.0" cy="852.4" r="4.6" fill="#000" fill-opacity="0.8"/><circle cx="1345.0" cy="861.9" r="4.6" fill="#000" fill-opacity="0.8"/><circle cx="1357.0" cy="862.6" r="4.6" fill="#000" fill-opacity="0.8"/><circle cx="1369.0" cy="858.6" r="4.6" fill="#000" fill-opacity="0.8"/><circle cx="1381.0" cy="864.1" r="4.6" fill="#000" fill-opacity="0.8"/><circle cx="1393.0" cy="867.4" r="4.6" fill="#000" fill-opacity="0.8"/><circle cx="1404.9" cy="860.1" r="4.6" fill="#000" fill-opacity="0.8"/><circle cx="1416.9" cy="868.1" r="4.6" fill="#000" fill-opacity="0.8"/><circle cx="1428.9" cy="874.3" r="4.6" fill="#000" fill-opacity="0.8"/><circle cx="1440.9" cy="876.9" r="4.6" fill="#000" fill-opacity="0.8"/><circle cx="1452.9" cy="886.0" r="4.6" fill="#000" fill-opacity="0.8"/><circle cx="1464.9" cy="892.2" r="4.6" fill="#000" fill-opacity="0.8"/><circle cx="1476.9" cy="890.7" r="4.6" fill="#000" fill-opacity="0.8"/><circle cx="1488.9" cy="887.1" r="4.6" fill="#000" fill-opacity="0.8"/><circle cx="1500.9" cy="885.6" r="4.6" fill="#000" fill-opacity="0.8"/><circle cx="1512.8" cy="883.1" r="4.6" fill="#000" fill-opacity="0.8"/><circle cx="1524.8" cy="884.9" r="4.6" fill="#000" fill-opacity="0.8"/><circle cx="1536.8" cy="879.4" r="4.6" fill="#000" fill-opacity="0.8"/><circle cx="1548.8" cy="881.2" r="4.6" fill="#000" fill-opacity="0.8"/><circle cx="1560.8" cy="881.2" r="4.6" fill="#000" fill-opacity="0.8"/><circle cx="1572.8" cy="879.8" r="4.6" fill="#000" fill-opacity="0.8"/><circle cx="1584.8" cy="881.6" r="4.6" fill="#000" fill-opacity="0.8"/><circle cx="1596.8" cy="883.4" r="4.6" fill="#000" fill-opacity="0.8"/><circle cx="1608.8" cy="886.0" r="4.6" fill="#000" fill-opacity="0.8"/><circle cx="1620.8" cy="882.3" r="4.6" fill="#000" fill-opacity="0.8"/><circle cx="1632.8" cy="882.7" r="4.6" fill="#000" fill-opacity="0.8"/><circle cx="1644.7" cy="881.6" r="4.6" fill="#000" fill-opacity="0.8"/><circle cx="1656.7" cy="879.4" r="4.6" fill="#000" fill-opacity="0.8"/><circle cx="1668.7" cy="880.5" r="4.6" fill="#000" fill-opacity="0.8"/><circle cx="1680.7" cy="882.3" r="4.6" fill="#000" fill-opacity="0.8"/><circle cx="1692.7" cy="878.7" r="4.6" fill="#000" fill-opacity="0.8"/><circle cx="1704.7" cy="879.4" r="4.6" fill="#000" fill-opacity="0.8"/><circle cx="1716.7" cy="879.8" r="4.6" fill="#000" fill-opacity="0.8"/><circle cx="1728.7" cy="878.7" r="4.6" fill="#000" fill-opacity="0.8"/><circle cx="1740.7" cy="879.8" r="4.6" fill="#000" fill-opacity="0.8"/><circle cx="1752.7" cy="881.2" r="4.6" fill="#000" fill-opacity="0.8"/><circle cx="1764.6" cy="881.2" r="4.6" fill="#000" fill-opacity="0.8"/><circle cx="1776.6" cy="881.6" r="4.6" fill="#000" fill-opacity="0.8"/><circle cx="1788.6" cy="883.1" r="4.6" fill="#000" fill-opacity="0.8"/><circle cx="1800.6" cy="883.1" r="4.6" fill="#000" fill-opacity="0.8"/><circle cx="1812.6" cy="882.3" r="4.6" fill="#000" fill-opacity="0.8"/><circle cx="1824.6" cy="882.3" r="4.6" fill="#000" fill-opacity="0.8"/>
<polyline points="1333.0,636.3 1345.0,643.2 1357.0,650.1 1369.0,651.6 1381.0,659.3 1393.0,658.5 1404.9,650.1 1416.9,630.5 1428.9,629.7 1440.9,618.4 1452.9,614.8 1464.9,622.4 1476.9,626.4 1488.9,618.4 1500.9,627.5 1512.8,634.8 1524.8,643.2 1536.8,645.0 1548.8,650.1 1560.8,648.7 1572.8,650.1 1584.8,659.3 1596.8,663.3 1608.8,671.3 1620.8,665.1 1632.8,665.1 1644.7,665.1 1656.7,661.4 1668.7,663.3 1680.7,661.4 1692.7,660.0 1704.7,658.5 1716.7,658.5 1728.7,660.0 1740.7,657.8 1752.7,676.4 1764.6,670.6 1776.6,670.6 1788.6,676.4 1800.6,674.2 1812.6,674.2 1824.6,670.6" fill="none" stroke="#f00" stroke-width="1.6" stroke-opacity="0.8"/><path d="M1333.0 621.0V650.5M1329.5 621.0h7M1329.5 650.5h7" stroke="#f00" stroke-width="1.6" stroke-opacity="0.8" fill="none"/><path d="M1345.0 628.3V657.8M1341.5 628.3h7M1341.5 657.8h7" stroke="#f00" stroke-width="1.6" stroke-opacity="0.8" fill="none"/><path d="M1357.0 635.6V665.5M1353.5 635.6h7M1353.5 665.5h7" stroke="#f00" stroke-width="1.6" stroke-opacity="0.8" fill="none"/><path d="M1369.0 635.6V667.3M1365.5 635.6h7M1365.5 667.3h7" stroke="#f00" stroke-width="1.6" stroke-opacity="0.8" fill="none"/><path d="M1381.0 644.3V674.6M1377.5 644.3h7M1377.5 674.6h7" stroke="#f00" stroke-width="1.6" stroke-opacity="0.8" fill="none"/><path d="M1393.0 642.1V673.8M1389.5 642.1h7M1389.5 673.8h7" stroke="#f00" stroke-width="1.6" stroke-opacity="0.8" fill="none"/><path d="M1404.9 634.1V667.3M1401.4 634.1h7M1401.4 667.3h7" stroke="#f00" stroke-width="1.6" stroke-opacity="0.8" fill="none"/><path d="M1416.9 613.7V647.6M1413.4 613.7h7M1413.4 647.6h7" stroke="#f00" stroke-width="1.6" stroke-opacity="0.8" fill="none"/><path d="M1428.9 610.8V647.6M1425.4 610.8h7M1425.4 647.6h7" stroke="#f00" stroke-width="1.6" stroke-opacity="0.8" fill="none"/><path d="M1440.9 599.1V637.4M1437.4 599.1h7M1437.4 637.4h7" stroke="#f00" stroke-width="1.6" stroke-opacity="0.8" fill="none"/><path d="M1452.9 594.4V633.0M1449.4 594.4h7M1449.4 633.0h7" stroke="#f00" stroke-width="1.6" stroke-opacity="0.8" fill="none"/><path d="M1464.9 602.7V642.5M1461.4 602.7h7M1461.4 642.5h7" stroke="#f00" stroke-width="1.6" stroke-opacity="0.8" fill="none"/><path d="M1476.9 607.1V646.5M1473.4 607.1h7M1473.4 646.5h7" stroke="#f00" stroke-width="1.6" stroke-opacity="0.8" fill="none"/><path d="M1488.9 597.6V639.6M1485.4 597.6h7M1485.4 639.6h7" stroke="#f00" stroke-width="1.6" stroke-opacity="0.8" fill="none"/><path d="M1500.9 606.4V649.8M1497.4 606.4h7M1497.4 649.8h7" stroke="#f00" stroke-width="1.6" stroke-opacity="0.8" fill="none"/><path d="M1512.8 613.3V656.3M1509.3 613.3h7M1509.3 656.3h7" stroke="#f00" stroke-width="1.6" stroke-opacity="0.8" fill="none"/><path d="M1524.8 622.4V664.7M1521.3 622.4h7M1521.3 664.7h7" stroke="#f00" stroke-width="1.6" stroke-opacity="0.8" fill="none"/><path d="M1536.8 623.5V666.5M1533.3 623.5h7M1533.3 666.5h7" stroke="#f00" stroke-width="1.6" stroke-opacity="0.8" fill="none"/><path d="M1548.8 628.3V671.7M1545.3 628.3h7M1545.3 671.7h7" stroke="#f00" stroke-width="1.6" stroke-opacity="0.8" fill="none"/><path d="M1560.8 627.5V670.6M1557.3 627.5h7M1557.3 670.6h7" stroke="#f00" stroke-width="1.6" stroke-opacity="0.8" fill="none"/><path d="M1572.8 629.4V670.6M1569.3 629.4h7M1569.3 670.6h7" stroke="#f00" stroke-width="1.6" stroke-opacity="0.8" fill="none"/><path d="M1584.8 639.2V680.0M1581.3 639.2h7M1581.3 680.0h7" stroke="#f00" stroke-width="1.6" stroke-opacity="0.8" fill="none"/><path d="M1596.8 642.5V683.7M1593.3 642.5h7M1593.3 683.7h7" stroke="#f00" stroke-width="1.6" stroke-opacity="0.8" fill="none"/><path d="M1608.8 650.9V691.7M1605.3 650.9h7M1605.3 691.7h7" stroke="#f00" stroke-width="1.6" stroke-opacity="0.8" fill="none"/><path d="M1620.8 642.5V686.2M1617.3 642.5h7M1617.3 686.2h7" stroke="#f00" stroke-width="1.6" stroke-opacity="0.8" fill="none"/><path d="M1632.8 642.5V686.2M1629.2 642.5h7M1629.2 686.2h7" stroke="#f00" stroke-width="1.6" stroke-opacity="0.8" fill="none"/><path d="M1644.7 641.8V689.2M1641.2 641.8h7M1641.2 689.2h7" stroke="#f00" stroke-width="1.6" stroke-opacity="0.8" fill="none"/><path d="M1656.7 639.2V684.4M1653.2 639.2h7M1653.2 684.4h7" stroke="#f00" stroke-width="1.6" stroke-opacity="0.8" fill="none"/><path d="M1668.7 639.2V686.2M1665.2 639.2h7M1665.2 686.2h7" stroke="#f00" stroke-width="1.6" stroke-opacity="0.8" fill="none"/><path d="M1680.7 639.2V685.1M1677.2 639.2h7M1677.2 685.1h7" stroke="#f00" stroke-width="1.6" stroke-opacity="0.8" fill="none"/><path d="M1692.7 638.5V684.4M1689.2 638.5h7M1689.2 684.4h7" stroke="#f00" stroke-width="1.6" stroke-opacity="0.8" fill="none"/><path d="M1704.7 635.2V681.9M1701.2 635.2h7M1701.2 681.9h7" stroke="#f00" stroke-width="1.6" stroke-opacity="0.8" fill="none"/><path d="M1716.7 634.8V681.9M1713.2 634.8h7M1713.2 681.9h7" stroke="#f00" stroke-width="1.6" stroke-opacity="0.8" fill="none"/><path d="M1728.7 637.4V683.0M1725.2 637.4h7M1725.2 683.0h7" stroke="#f00" stroke-width="1.6" stroke-opacity="0.8" fill="none"/><path d="M1740.7 635.2V681.9M1737.2 635.2h7M1737.2 681.9h7" stroke="#f00" stroke-width="1.6" stroke-opacity="0.8" fill="none"/><path d="M1752.7 656.0V697.2M1749.2 656.0h7M1749.2 697.2h7" stroke="#f00" stroke-width="1.6" stroke-opacity="0.8" fill="none"/><path d="M1764.6 649.8V690.6M1761.1 649.8h7M1761.1 690.6h7" stroke="#f00" stroke-width="1.6" stroke-opacity="0.8" fill="none"/><path d="M1776.6 649.4V691.0M1773.1 649.4h7M1773.1 691.0h7" stroke="#f00" stroke-width="1.6" stroke-opacity="0.8" fill="none"/><path d="M1788.6 657.8V696.1M1785.1 657.8h7M1785.1 696.1h7" stroke="#f00" stroke-width="1.6" stroke-opacity="0.8" fill="none"/><path d="M1800.6 654.2V694.3M1797.1 654.2h7M1797.1 694.3h7" stroke="#f00" stroke-width="1.6" stroke-opacity="0.8" fill="none"/><path d="M1812.6 654.2V694.3M1809.1 654.2h7M1809.1 694.3h7" stroke="#f00" stroke-width="1.6" stroke-opacity="0.8" fill="none"/><path d="M1824.6 649.0V690.2M1821.1 649.0h7M1821.1 690.2h7" stroke="#f00" stroke-width="1.6" stroke-opacity="0.8" fill="none"/><circle cx="1333.0" cy="636.3" r="4.6" fill="#f00" fill-opacity="0.8"/><circle cx="1345.0" cy="643.2" r="4.6" fill="#f00" fill-opacity="0.8"/><circle cx="1357.0" cy="650.1" r="4.6" fill="#f00" fill-opacity="0.8"/><circle cx="1369.0" cy="651.6" r="4.6" fill="#f00" fill-opacity="0.8"/><circle cx="1381.0" cy="659.3" r="4.6" fill="#f00" fill-opacity="0.8"/><circle cx="1393.0" cy="658.5" r="4.6" fill="#f00" fill-opacity="0.8"/><circle cx="1404.9" cy="650.1" r="4.6" fill="#f00" fill-opacity="0.8"/><circle cx="1416.9" cy="630.5" r="4.6" fill="#f00" fill-opacity="0.8"/><circle cx="1428.9" cy="629.7" r="4.6" fill="#f00" fill-opacity="0.8"/><circle cx="1440.9" cy="618.4" r="4.6" fill="#f00" fill-opacity="0.8"/><circle cx="1452.9" cy="614.8" r="4.6" fill="#f00" fill-opacity="0.8"/><circle cx="1464.9" cy="622.4" r="4.6" fill="#f00" fill-opacity="0.8"/><circle cx="1476.9" cy="626.4" r="4.6" fill="#f00" fill-opacity="0.8"/><circle cx="1488.9" cy="618.4" r="4.6" fill="#f00" fill-opacity="0.8"/><circle cx="1500.9" cy="627.5" r="4.6" fill="#f00" fill-opacity="0.8"/><circle cx="1512.8" cy="634.8" r="4.6" fill="#f00" fill-opacity="0.8"/><circle cx="1524.8" cy="643.2" r="4.6" fill="#f00" fill-opacity="0.8"/><circle cx="1536.8" cy="645.0" r="4.6" fill="#f00" fill-opacity="0.8"/><circle cx="1548.8" cy="650.1" r="4.6" fill="#f00" fill-opacity="0.8"/><circle cx="1560.8" cy="648.7" r="4.6" fill="#f00" fill-opacity="0.8"/><circle cx="1572.8" cy="650.1" r="4.6" fill="#f00" fill-opacity="0.8"/><circle cx="1584.8" cy="659.3" r="4.6" fill="#f00" fill-opacity="0.8"/><circle cx="1596.8" cy="663.3" r="4.6" fill="#f00" fill-opacity="0.8"/><circle cx="1608.8" cy="671.3" r="4.6" fill="#f00" fill-opacity="0.8"/><circle cx="1620.8" cy="665.1" r="4.6" fill="#f00" fill-opacity="0.8"/><circle cx="1632.8" cy="665.1" r="4.6" fill="#f00" fill-opacity="0.8"/><circle cx="1644.7" cy="665.1" r="4.6" fill="#f00" fill-opacity="0.8"/><circle cx="1656.7" cy="661.4" r="4.6" fill="#f00" fill-opacity="0.8"/><circle cx="1668.7" cy="663.3" r="4.6" fill="#f00" fill-opacity="0.8"/><circle cx="1680.7" cy="661.4" r="4.6" fill="#f00" fill-opacity="0.8"/><circle cx="1692.7" cy="660.0" r="4.6" fill="#f00" fill-opacity="0.8"/><circle cx="1704.7" cy="658.5" r="4.6" fill="#f00" fill-opacity="0.8"/><circle cx="1716.7" cy="658.5" r="4.6" fill="#f00" fill-opacity="0.8"/><circle cx="1728.7" cy="660.0" r="4.6" fill="#f00" fill-opacity="0.8"/><circle cx="1740.7" cy="657.8" r="4.6" fill="#f00" fill-opacity="0.8"/><circle cx="1752.7" cy="676.4" r="4.6" fill="#f00" fill-opacity="0.8"/><circle cx="1764.6" cy="670.6" r="4.6" fill="#f00" fill-opacity="0.8"/><circle cx="1776.6" cy="670.6" r="4.6" fill="#f00" fill-opacity="0.8"/><circle cx="1788.6" cy="676.4" r="4.6" fill="#f00" fill-opacity="0.8"/><circle cx="1800.6" cy="674.2" r="4.6" fill="#f00" fill-opacity="0.8"/><circle cx="1812.6" cy="674.2" r="4.6" fill="#f00" fill-opacity="0.8"/><circle cx="1824.6" cy="670.6" r="4.6" fill="#f00" fill-opacity="0.8"/>
<polyline points="1333.0,578.0 1345.0,567.4 1357.0,597.6 1369.0,602.0 1381.0,590.7 1393.0,609.3 1404.9,598.0 1416.9,582.3 1428.9,564.5 1440.9,572.1 1452.9,553.5 1464.9,546.2 1476.9,551.0 1488.9,549.2 1500.9,557.2 1512.8,500.3 1524.8,586.3 1536.8,586.3 1548.8,577.2 1560.8,577.2 1572.8,598.0 1584.8,602.0 1596.8,597.6 1608.8,602.0 1620.8,619.5 1632.8,568.5 1644.7,602.0 1656.7,542.6 1668.7,597.6 1680.7,601.3 1692.7,609.3 1704.7,611.1 1716.7,600.6 1728.7,597.6 1740.7,612.2 1752.7,615.1 1764.6,613.7 1776.6,609.3 1788.6,622.4 1800.6,635.6 1812.6,615.1 1824.6,626.4" fill="none" stroke="#00f" stroke-width="1.6" stroke-opacity="0.8"/><path d="M1333.0 561.2V595.1M1329.5 561.2h7M1329.5 595.1h7" stroke="#00f" stroke-width="1.6" stroke-opacity="0.8" fill="none"/><path d="M1345.0 548.4V586.3M1341.5 548.4h7M1341.5 586.3h7" stroke="#00f" stroke-width="1.6" stroke-opacity="0.8" fill="none"/><path d="M1357.0 580.1V615.1M1353.5 580.1h7M1353.5 615.1h7" stroke="#00f" stroke-width="1.6" stroke-opacity="0.8" fill="none"/><path d="M1369.0 583.1V621.3M1365.5 583.1h7M1365.5 621.3h7" stroke="#00f" stroke-width="1.6" stroke-opacity="0.8" fill="none"/><path d="M1381.0 572.1V608.9M1377.5 572.1h7M1377.5 608.9h7" stroke="#00f" stroke-width="1.6" stroke-opacity="0.8" fill="none"/><path d="M1393.0 593.3V626.8M1389.5 593.3h7M1389.5 626.8h7" stroke="#00f" stroke-width="1.6" stroke-opacity="0.8" fill="none"/><path d="M1404.9 579.1V617.0M1401.4 579.1h7M1401.4 617.0h7" stroke="#00f" stroke-width="1.6" stroke-opacity="0.8" fill="none"/><path d="M1416.9 563.4V602.4M1413.4 563.4h7M1413.4 602.4h7" stroke="#00f" stroke-width="1.6" stroke-opacity="0.8" fill="none"/><path d="M1428.9 543.3V586.7M1425.4 543.3h7M1425.4 586.7h7" stroke="#00f" stroke-width="1.6" stroke-opacity="0.8" fill="none"/><path d="M1440.9 550.3V593.6M1437.4 550.3h7M1437.4 593.6h7" stroke="#00f" stroke-width="1.6" stroke-opacity="0.8" fill="none"/><path d="M1452.9 529.1V578.7M1449.4 529.1h7M1449.4 578.7h7" stroke="#00f" stroke-width="1.6" stroke-opacity="0.8" fill="none"/><path d="M1464.9 521.5V570.3M1461.4 521.5h7M1461.4 570.3h7" stroke="#00f" stroke-width="1.6" stroke-opacity="0.8" fill="none"/><path d="M1476.9 526.2V575.4M1473.4 526.2h7M1473.4 575.4h7" stroke="#00f" stroke-width="1.6" stroke-opacity="0.8" fill="none"/><path d="M1488.9 523.3V574.3M1485.4 523.3h7M1485.4 574.3h7" stroke="#00f" stroke-width="1.6" stroke-opacity="0.8" fill="none"/><path d="M1500.9 529.8V584.5M1497.4 529.8h7M1497.4 584.5h7" stroke="#00f" stroke-width="1.6" stroke-opacity="0.8" fill="none"/><path d="M1512.8 470.0V530.2M1509.3 470.0h7M1509.3 530.2h7" stroke="#00f" stroke-width="1.6" stroke-opacity="0.8" fill="none"/><path d="M1524.8 560.5V612.2M1521.3 560.5h7M1521.3 612.2h7" stroke="#00f" stroke-width="1.6" stroke-opacity="0.8" fill="none"/><path d="M1536.8 560.5V613.3M1533.3 560.5h7M1533.3 613.3h7" stroke="#00f" stroke-width="1.6" stroke-opacity="0.8" fill="none"/><path d="M1548.8 550.3V604.6M1545.3 550.3h7M1545.3 604.6h7" stroke="#00f" stroke-width="1.6" stroke-opacity="0.8" fill="none"/><path d="M1560.8 550.3V604.6M1557.3 550.3h7M1557.3 604.6h7" stroke="#00f" stroke-width="1.6" stroke-opacity="0.8" fill="none"/><path d="M1572.8 573.6V623.5M1569.3 573.6h7M1569.3 623.5h7" stroke="#00f" stroke-width="1.6" stroke-opacity="0.8" fill="none"/><path d="M1584.8 577.6V627.5M1581.3 577.6h7M1581.3 627.5h7" stroke="#00f" stroke-width="1.6" stroke-opacity="0.8" fill="none"/><path d="M1596.8 571.4V623.9M1593.3 571.4h7M1593.3 623.9h7" stroke="#00f" stroke-width="1.6" stroke-opacity="0.8" fill="none"/><path d="M1608.8 576.5V627.9M1605.3 576.5h7M1605.3 627.9h7" stroke="#00f" stroke-width="1.6" stroke-opacity="0.8" fill="none"/><path d="M1620.8 594.4V644.7M1617.3 594.4h7M1617.3 644.7h7" stroke="#00f" stroke-width="1.6" stroke-opacity="0.8" fill="none"/><path d="M1632.8 538.2V598.0M1629.2 538.2h7M1629.2 598.0h7" stroke="#00f" stroke-width="1.6" stroke-opacity="0.8" fill="none"/><path d="M1644.7 573.2V632.3M1641.2 573.2h7M1641.2 632.3h7" stroke="#00f" stroke-width="1.6" stroke-opacity="0.8" fill="none"/><path d="M1656.7 510.1V575.8M1653.2 510.1h7M1653.2 575.8h7" stroke="#00f" stroke-width="1.6" stroke-opacity="0.8" fill="none"/><path d="M1668.7 567.0V627.9M1665.2 567.0h7M1665.2 627.9h7" stroke="#00f" stroke-width="1.6" stroke-opacity="0.8" fill="none"/><path d="M1680.7 572.1V629.7M1677.2 572.1h7M1677.2 629.7h7" stroke="#00f" stroke-width="1.6" stroke-opacity="0.8" fill="none"/><path d="M1692.7 581.2V638.1M1689.2 581.2h7M1689.2 638.1h7" stroke="#00f" stroke-width="1.6" stroke-opacity="0.8" fill="none"/><path d="M1704.7 583.1V639.9M1701.2 583.1h7M1701.2 639.9h7" stroke="#00f" stroke-width="1.6" stroke-opacity="0.8" fill="none"/><path d="M1716.7 570.3V630.8M1713.2 570.3h7M1713.2 630.8h7" stroke="#00f" stroke-width="1.6" stroke-opacity="0.8" fill="none"/><path d="M1728.7 569.2V624.3M1725.2 569.2h7M1725.2 624.3h7" stroke="#00f" stroke-width="1.6" stroke-opacity="0.8" fill="none"/><path d="M1740.7 585.6V638.8M1737.2 585.6h7M1737.2 638.8h7" stroke="#00f" stroke-width="1.6" stroke-opacity="0.8" fill="none"/><path d="M1752.7 591.4V639.6M1749.2 591.4h7M1749.2 639.6h7" stroke="#00f" stroke-width="1.6" stroke-opacity="0.8" fill="none"/><path d="M1764.6 589.6V638.1M1761.1 589.6h7M1761.1 638.1h7" stroke="#00f" stroke-width="1.6" stroke-opacity="0.8" fill="none"/><path d="M1776.6 585.6V633.0M1773.1 585.6h7M1773.1 633.0h7" stroke="#00f" stroke-width="1.6" stroke-opacity="0.8" fill="none"/><path d="M1788.6 598.0V645.8M1785.1 598.0h7M1785.1 645.8h7" stroke="#00f" stroke-width="1.6" stroke-opacity="0.8" fill="none"/><path d="M1800.6 613.3V657.8M1797.1 613.3h7M1797.1 657.8h7" stroke="#00f" stroke-width="1.6" stroke-opacity="0.8" fill="none"/><path d="M1812.6 592.2V637.7M1809.1 592.2h7M1809.1 637.7h7" stroke="#00f" stroke-width="1.6" stroke-opacity="0.8" fill="none"/><path d="M1824.6 605.3V648.3M1821.1 605.3h7M1821.1 648.3h7" stroke="#00f" stroke-width="1.6" stroke-opacity="0.8" fill="none"/><circle cx="1333.0" cy="578.0" r="4.6" fill="#00f" fill-opacity="0.8"/><circle cx="1345.0" cy="567.4" r="4.6" fill="#00f" fill-opacity="0.8"/><circle cx="1357.0" cy="597.6" r="4.6" fill="#00f" fill-opacity="0.8"/><circle cx="1369.0" cy="602.0" r="4.6" fill="#00f" fill-opacity="0.8"/><circle cx="1381.0" cy="590.7" r="4.6" fill="#00f" fill-opacity="0.8"/><circle cx="1393.0" cy="609.3" r="4.6" fill="#00f" fill-opacity="0.8"/><circle cx="1404.9" cy="598.0" r="4.6" fill="#00f" fill-opacity="0.8"/><circle cx="1416.9" cy="582.3" r="4.6" fill="#00f" fill-opacity="0.8"/><circle cx="1428.9" cy="564.5" r="4.6" fill="#00f" fill-opacity="0.8"/><circle cx="1440.9" cy="572.1" r="4.6" fill="#00f" fill-opacity="0.8"/><circle cx="1452.9" cy="553.5" r="4.6" fill="#00f" fill-opacity="0.8"/><circle cx="1464.9" cy="546.2" r="4.6" fill="#00f" fill-opacity="0.8"/><circle cx="1476.9" cy="551.0" r="4.6" fill="#00f" fill-opacity="0.8"/><circle cx="1488.9" cy="549.2" r="4.6" fill="#00f" fill-opacity="0.8"/><circle cx="1500.9" cy="557.2" r="4.6" fill="#00f" fill-opacity="0.8"/><circle cx="1512.8" cy="500.3" r="4.6" fill="#00f" fill-opacity="0.8"/><circle cx="1524.8" cy="586.3" r="4.6" fill="#00f" fill-opacity="0.8"/><circle cx="1536.8" cy="586.3" r="4.6" fill="#00f" fill-opacity="0.8"/><circle cx="1548.8" cy="577.2" r="4.6" fill="#00f" fill-opacity="0.8"/><circle cx="1560.8" cy="577.2" r="4.6" fill="#00f" fill-opacity="0.8"/><circle cx="1572.8" cy="598.0" r="4.6" fill="#00f" fill-opacity="0.8"/><circle cx="1584.8" cy="602.0" r="4.6" fill="#00f" fill-opacity="0.8"/><circle cx="1596.8" cy="597.6" r="4.6" fill="#00f" fill-opacity="0.8"/><circle cx="1608.8" cy="602.0" r="4.6" fill="#00f" fill-opacity="0.8"/><circle cx="1620.8" cy="619.5" r="4.6" fill="#00f" fill-opacity="0.8"/><circle cx="1632.8" cy="568.5" r="4.6" fill="#00f" fill-opacity="0.8"/><circle cx="1644.7" cy="602.0" r="4.6" fill="#00f" fill-opacity="0.8"/><circle cx="1656.7" cy="542.6" r="4.6" fill="#00f" fill-opacity="0.8"/><circle cx="1668.7" cy="597.6" r="4.6" fill="#00f" fill-opacity="0.8"/><circle cx="1680.7" cy="601.3" r="4.6" fill="#00f" fill-opacity="0.8"/><circle cx="1692.7" cy="609.3" r="4.6" fill="#00f" fill-opacity="0.8"/><circle cx="1704.7" cy="611.1" r="4.6" fill="#00f" fill-opacity="0.8"/><circle cx="1716.7" cy="600.6" r="4.6" fill="#00f" fill-opacity="0.8"/><circle cx="1728.7" cy="597.6" r="4.6" fill="#00f" fill-opacity="0.8"/><circle cx="1740.7" cy="612.2" r="4.6" fill="#00f" fill-opacity="0.8"/><circle cx="1752.7" cy="615.1" r="4.6" fill="#00f" fill-opacity="0.8"/><circle cx="1764.6" cy="613.7" r="4.6" fill="#00f" fill-opacity="0.8"/><circle cx="1776.6" cy="609.3" r="4.6" fill="#00f" fill-opacity="0.8"/><circle cx="1788.6" cy="622.4" r="4.6" fill="#00f" fill-opacity="0.8"/><circle cx="1800.6" cy="635.6" r="4.6" fill="#00f" fill-opacity="0.8"/><circle cx="1812.6" cy="615.1" r="4.6" fill="#00f" fill-opacity="0.8"/><circle cx="1824.6" cy="626.4" r="4.6" fill="#00f" fill-opacity="0.8"/>
<rect x="1671.5" y="456.5" width="171" height="66" rx="2" fill="#fff" fill-opacity="0.8" stroke="#ccc" stroke-width="1"/>
<path d="M1674 467H1704M1689.7 460V474M1686.2 460h7M1686.2 474h7" stroke="#000" stroke-opacity="0.8" stroke-width="1.6" fill="none"/><circle cx="1689.7" cy="467" r="4.6" fill="#000" fill-opacity="0.8"/>
<text x="1714.5" y="472" font-family="Liberation Sans" font-size="14.7" fill="#000">24_03_14_03_ch0</text>
<path d="M1674 488H1704M1689.7 481V495M1686.2 481h7M1686.2 495h7" stroke="#f00" stroke-opacity="0.8" stroke-width="1.6" fill="none"/><circle cx="1689.7" cy="488" r="4.6" fill="#f00" fill-opacity="0.8"/>
<text x="1714.5" y="493" font-family="Liberation Sans" font-size="14.7" fill="#000">24_03_14_03_ch1</text>
<path d="M1674 509H1704M1689.7 502V516M1686.2 502h7M1686.2 516h7" stroke="#00f" stroke-opacity="0.8" stroke-width="1.6" fill="none"/><circle cx="1689.7" cy="509" r="4.6" fill="#00f" fill-opacity="0.8"/>
<text x="1714.5" y="514" font-family="Liberation Sans" font-size="14.7" fill="#000">24_03_14_03_ch3</text>
</svg>
</body></html>
